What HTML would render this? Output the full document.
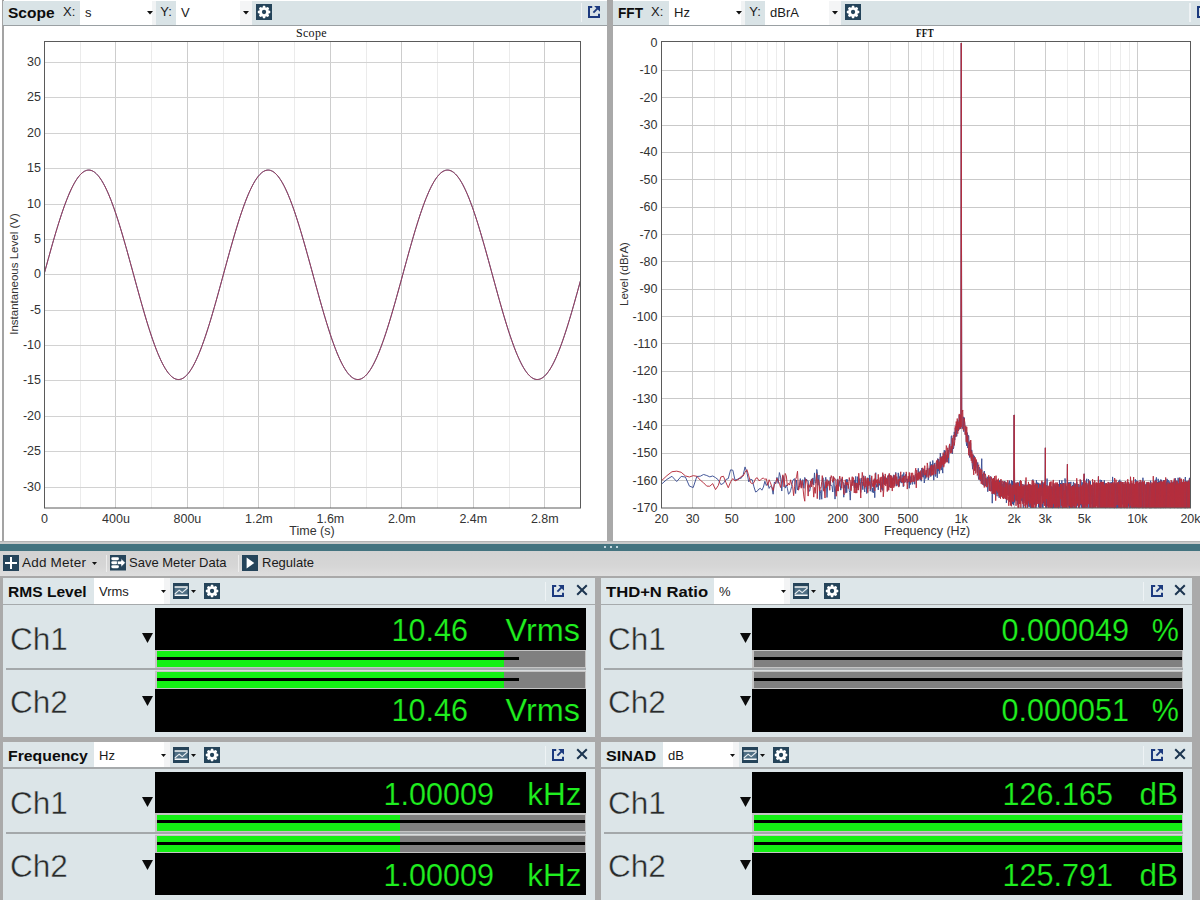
<!DOCTYPE html>
<html><head><meta charset="utf-8"><title>Scope / FFT meters</title>
<style>
html,body{margin:0;padding:0;}
body{width:1200px;height:900px;overflow:hidden;background:#fff;position:relative;
 font-family:"Liberation Sans",sans-serif;}
div,span,svg{position:absolute;}
span{white-space:nowrap;line-height:1;}
.tk{font-size:12.5px;color:#333;}
.r{text-align:right;}
.c{text-align:center;}
.big{font-size:31.5px;color:#1fee1f;-webkit-text-stroke:0.2px #000;transform-origin:100% 50%;}
.ch{font-size:32px;color:#2a2a2a;-webkit-text-stroke:0.45px #dce5e8;letter-spacing:0;transform-origin:0 0;transform:scaleX(0.985);}
.hb{font-size:15px;font-weight:bold;color:#0c0c0c;transform-origin:0 50%;}
.hs{font-size:13px;color:#1a1a1a;}
</style></head><body>

<div style="left:2px;top:0px;width:1.5px;height:541px;background:#a3a3a3;"></div>
<div style="left:3px;top:1px;width:604px;height:24px;background:#d9e3e6;"></div>
<div style="left:3px;top:25px;width:604px;height:1px;background:#9aa0a3;"></div>
<span class="hb" style="left:8px;top:5.7px;font-size:14.5px;letter-spacing:0px;transform-origin:0 50%;transform:scaleX(1.07);">Scope</span>
<span class="hs" style="left:63px;top:4.7px;font-size:13px;">X:</span>
<div style="left:80px;top:1px;width:76px;height:24px;background:#fff;"></div>
<div style="left:152px;top:1px;width:4px;height:24px;background:#f1f3f4;"></div>
<span class="hs" style="left:85px;top:6px;">s</span>
<svg style="left:147px;top:11px" width="6" height="3.5" viewBox="0 0 6 3.5"><path d="M0 0H6L3.0 3.5Z" fill="#111"/></svg>
<span class="hs" style="left:160.3px;top:4.7px;font-size:13px;">Y:</span>
<div style="left:176px;top:1px;width:76px;height:24px;background:#fff;"></div>
<div style="left:240px;top:1px;width:12px;height:24px;background:#f4f5f6;"></div>
<span class="hs" style="left:181px;top:6px;">V</span>
<svg style="left:243px;top:11px" width="6" height="3.5" viewBox="0 0 6 3.5"><path d="M0 0H6L3.0 3.5Z" fill="#111"/></svg>
<svg style="left:256.25px;top:4px" width="16" height="16" viewBox="0 0 16 16"><rect width="16" height="16" fill="#25445a"/><polygon points="6.39,3.71 7.05,1.78 9.05,1.78 9.71,3.71 9.91,3.79 11.74,2.89 13.16,4.31 12.26,6.14 12.34,6.34 14.27,7.00 14.27,9.00 12.34,9.66 12.26,9.86 13.16,11.69 11.74,13.11 9.91,12.21 9.71,12.29 9.05,14.22 7.05,14.22 6.39,12.29 6.19,12.21 4.36,13.11 2.94,11.69 3.84,9.86 3.76,9.66 1.83,9.00 1.83,7.00 3.76,6.34 3.84,6.14 2.94,4.31 4.36,2.89 6.19,3.79" fill="#fff"/><circle cx="8.05" cy="8.0" r="2.15" fill="#25445a"/></svg>
<div style="left:580.5px;top:3px;width:1.5px;height:19px;background:#eef2f4;"></div>
<svg style="left:588px;top:6px" width="12" height="12" viewBox="0 0 12 12"><path d="M4.2 1H1V11H11V7.8" fill="none" stroke="#1c3a7e" stroke-width="2"/><path d="M5.4 6.6L9.8 2.2" fill="none" stroke="#1c3a7e" stroke-width="1.9"/><path d="M6.2 0H12V5.8Z" fill="#1c3a7e"/></svg>
<div style="left:607px;top:0px;width:6px;height:541px;background:#a9a9a9;"></div>
<div style="left:613px;top:1px;width:587px;height:24px;background:#d9e3e6;"></div>
<div style="left:613px;top:25px;width:587px;height:1px;background:#9aa0a3;"></div>
<span class="hb" style="left:618px;top:5.7px;font-size:14.5px;letter-spacing:0px;transform-origin:0 50%;transform:scaleX(0.94);">FFT</span>
<span class="hs" style="left:651px;top:4.7px;font-size:13px;">X:</span>
<div style="left:669px;top:1px;width:76px;height:24px;background:#fff;"></div>
<div style="left:741px;top:1px;width:4px;height:24px;background:#f1f3f4;"></div>
<span class="hs" style="left:674px;top:6px;">Hz</span>
<svg style="left:736px;top:11px" width="6" height="3.5" viewBox="0 0 6 3.5"><path d="M0 0H6L3.0 3.5Z" fill="#111"/></svg>
<span class="hs" style="left:749.3px;top:4.7px;font-size:13px;">Y:</span>
<div style="left:765px;top:1px;width:76px;height:24px;background:#fff;"></div>
<div style="left:829px;top:1px;width:12px;height:24px;background:#f4f5f6;"></div>
<span class="hs" style="left:770px;top:6px;">dBrA</span>
<svg style="left:832px;top:11px" width="6" height="3.5" viewBox="0 0 6 3.5"><path d="M0 0H6L3.0 3.5Z" fill="#111"/></svg>
<svg style="left:845.25px;top:4px" width="16" height="16" viewBox="0 0 16 16"><rect width="16" height="16" fill="#25445a"/><polygon points="6.39,3.71 7.05,1.78 9.05,1.78 9.71,3.71 9.91,3.79 11.74,2.89 13.16,4.31 12.26,6.14 12.34,6.34 14.27,7.00 14.27,9.00 12.34,9.66 12.26,9.86 13.16,11.69 11.74,13.11 9.91,12.21 9.71,12.29 9.05,14.22 7.05,14.22 6.39,12.29 6.19,12.21 4.36,13.11 2.94,11.69 3.84,9.86 3.76,9.66 1.83,9.00 1.83,7.00 3.76,6.34 3.84,6.14 2.94,4.31 4.36,2.89 6.19,3.79" fill="#fff"/><circle cx="8.05" cy="8.0" r="2.15" fill="#25445a"/></svg>
<div style="left:1189.0px;top:3px;width:1.5px;height:19px;background:#eef2f4;"></div>
<svg style="left:1196.5px;top:6px" width="12" height="12" viewBox="0 0 12 12"><path d="M4.2 1H1V11H11V7.8" fill="none" stroke="#1c3a7e" stroke-width="2"/><path d="M5.4 6.6L9.8 2.2" fill="none" stroke="#1c3a7e" stroke-width="1.9"/><path d="M6.2 0H12V5.8Z" fill="#1c3a7e"/></svg>
<svg style="left:0;top:0" width="607" height="541" viewBox="0 0 607 541"><path d="M80.5 41.5V508" stroke="#ebebeb" stroke-width="1"/><path d="M115.5 41.5V508" stroke="#cdcdcd" stroke-width="1"/><path d="M151.5 41.5V508" stroke="#ebebeb" stroke-width="1"/><path d="M187.5 41.5V508" stroke="#cdcdcd" stroke-width="1"/><path d="M223.5 41.5V508" stroke="#ebebeb" stroke-width="1"/><path d="M258.5 41.5V508" stroke="#cdcdcd" stroke-width="1"/><path d="M294.5 41.5V508" stroke="#ebebeb" stroke-width="1"/><path d="M330.5 41.5V508" stroke="#cdcdcd" stroke-width="1"/><path d="M366.5 41.5V508" stroke="#ebebeb" stroke-width="1"/><path d="M401.5 41.5V508" stroke="#cdcdcd" stroke-width="1"/><path d="M437.5 41.5V508" stroke="#ebebeb" stroke-width="1"/><path d="M473.5 41.5V508" stroke="#cdcdcd" stroke-width="1"/><path d="M509.5 41.5V508" stroke="#ebebeb" stroke-width="1"/><path d="M544.5 41.5V508" stroke="#cdcdcd" stroke-width="1"/><path d="M44.5 487.5H580.5" stroke="#d2d2d2" stroke-width="1"/><path d="M44.5 451.5H580.5" stroke="#d2d2d2" stroke-width="1"/><path d="M44.5 416.5H580.5" stroke="#d2d2d2" stroke-width="1"/><path d="M44.5 380.5H580.5" stroke="#d2d2d2" stroke-width="1"/><path d="M44.5 345.5H580.5" stroke="#d2d2d2" stroke-width="1"/><path d="M44.5 310.5H580.5" stroke="#d2d2d2" stroke-width="1"/><path d="M44.5 274.5H580.5" stroke="#d2d2d2" stroke-width="1"/><path d="M44.5 239.5H580.5" stroke="#d2d2d2" stroke-width="1"/><path d="M44.5 204.5H580.5" stroke="#d2d2d2" stroke-width="1"/><path d="M44.5 168.5H580.5" stroke="#d2d2d2" stroke-width="1"/><path d="M44.5 133.5H580.5" stroke="#d2d2d2" stroke-width="1"/><path d="M44.5 97.5H580.5" stroke="#d2d2d2" stroke-width="1"/><path d="M44.5 62.5H580.5" stroke="#d2d2d2" stroke-width="1"/><polyline points="44.50,272.71 45.39,269.43 46.29,266.16 47.18,262.90 48.07,259.65 48.97,256.42 49.86,253.20 50.75,250.01 51.65,246.84 52.54,243.69 53.43,240.58 54.33,237.50 55.22,234.46 56.11,231.45 57.01,228.49 57.90,225.58 58.79,222.71 59.69,219.89 60.58,217.13 61.47,214.42 62.37,211.77 63.26,209.19 64.15,206.67 65.05,204.21 65.94,201.83 66.83,199.51 67.73,197.27 68.62,195.11 69.51,193.02 70.41,191.02 71.30,189.09 72.19,187.25 73.09,185.50 73.98,183.83 74.87,182.25 75.77,180.76 76.66,179.37 77.55,178.06 78.45,176.86 79.34,175.75 80.23,174.73 81.13,173.81 82.02,173.00 82.91,172.28 83.81,171.66 84.70,171.14 85.59,170.73 86.49,170.42 87.38,170.20 88.27,170.09 89.17,170.09 90.06,170.18 90.95,170.38 91.85,170.68 92.74,171.09 93.63,171.59 94.53,172.20 95.42,172.90 96.31,173.71 97.21,174.61 98.10,175.62 98.99,176.71 99.89,177.91 100.78,179.20 101.67,180.59 102.57,182.06 103.46,183.63 104.35,185.29 105.25,187.03 106.14,188.86 107.03,190.77 107.93,192.77 108.82,194.85 109.71,197.00 110.61,199.23 111.50,201.54 112.39,203.91 113.29,206.36 114.18,208.87 115.07,211.45 115.97,214.09 116.86,216.79 117.75,219.55 118.65,222.36 119.54,225.22 120.43,228.13 121.33,231.08 122.22,234.08 123.11,237.12 124.01,240.20 124.90,243.31 125.79,246.45 126.69,249.61 127.58,252.81 128.47,256.02 129.37,259.25 130.26,262.50 131.15,265.76 132.05,269.03 132.94,272.30 133.83,275.58 134.73,278.85 135.62,282.13 136.51,285.39 137.41,288.64 138.30,291.89 139.19,295.11 140.09,298.31 140.98,301.49 141.87,304.65 142.77,307.78 143.66,310.87 144.55,313.93 145.45,316.95 146.34,319.93 147.23,322.86 148.13,325.75 149.02,328.58 149.91,331.37 150.81,334.10 151.70,336.77 152.59,339.38 153.49,341.93 154.38,344.41 155.27,346.82 156.17,349.17 157.06,351.44 157.95,353.63 158.85,355.75 159.74,357.79 160.63,359.75 161.53,361.62 162.42,363.41 163.31,365.11 164.21,366.73 165.10,368.25 165.99,369.68 166.89,371.02 167.78,372.27 168.67,373.42 169.57,374.47 170.46,375.43 171.35,376.29 172.25,377.05 173.14,377.70 174.03,378.26 174.93,378.72 175.82,379.07 176.71,379.32 177.61,379.47 178.50,379.52 179.39,379.47 180.29,379.31 181.18,379.05 182.07,378.69 182.97,378.22 183.86,377.66 184.75,376.99 185.65,376.23 186.54,375.36 187.43,374.40 188.33,373.34 189.22,372.18 190.11,370.93 191.01,369.58 191.90,368.14 192.79,366.61 193.69,364.99 194.58,363.28 195.47,361.49 196.37,359.61 197.26,357.64 198.15,355.60 199.05,353.47 199.94,351.27 200.83,349.00 201.73,346.65 202.62,344.23 203.51,341.74 204.41,339.19 205.30,336.58 206.19,333.90 207.09,331.17 207.98,328.38 208.87,325.54 209.77,322.65 210.66,319.71 211.55,316.73 212.45,313.70 213.34,310.64 214.23,307.55 215.13,304.42 216.02,301.26 216.91,298.08 217.81,294.87 218.70,291.65 219.59,288.41 220.49,285.15 221.38,281.89 222.27,278.61 223.17,275.34 224.06,272.06 224.95,268.79 225.85,265.52 226.74,262.26 227.63,259.01 228.53,255.78 229.42,252.57 230.31,249.38 231.21,246.21 232.10,243.08 232.99,239.97 233.89,236.90 234.78,233.86 235.67,230.87 236.57,227.91 237.46,225.01 238.35,222.15 239.25,219.34 240.14,216.59 241.03,213.90 241.93,211.26 242.82,208.69 243.71,206.18 244.61,203.74 245.50,201.37 246.39,199.07 247.29,196.84 248.18,194.69 249.07,192.62 249.97,190.63 250.86,188.72 251.75,186.90 252.65,185.16 253.54,183.51 254.43,181.95 255.33,180.48 256.22,179.10 257.11,177.82 258.01,176.63 258.90,175.54 259.79,174.54 260.69,173.65 261.58,172.85 262.47,172.15 263.37,171.55 264.26,171.05 265.15,170.66 266.05,170.37 266.94,170.17 267.83,170.09 268.73,170.10 269.62,170.22 270.51,170.43 271.41,170.76 272.30,171.18 273.19,171.70 274.09,172.33 274.98,173.05 275.87,173.88 276.77,174.80 277.66,175.82 278.55,176.94 279.45,178.16 280.34,179.47 281.23,180.87 282.13,182.36 283.02,183.95 283.91,185.62 284.81,187.38 285.70,189.23 286.59,191.16 287.49,193.17 288.38,195.26 289.27,197.43 290.17,199.68 291.06,202.00 291.95,204.39 292.85,206.85 293.74,209.38 294.63,211.97 295.53,214.62 296.42,217.33 297.31,220.10 298.21,222.92 299.10,225.79 299.99,228.71 300.89,231.67 301.78,234.68 302.67,237.72 303.57,240.81 304.46,243.92 305.35,247.07 306.25,250.24 307.14,253.44 308.03,256.65 308.93,259.89 309.82,263.14 310.71,266.40 311.61,269.67 312.50,272.95 313.39,276.22 314.29,279.50 315.18,282.77 316.07,286.03 316.97,289.28 317.86,292.52 318.75,295.74 319.65,298.94 320.54,302.12 321.43,305.27 322.33,308.39 323.22,311.47 324.11,314.52 325.01,317.54 325.90,320.51 326.79,323.43 327.69,326.31 328.58,329.14 329.47,331.91 330.37,334.63 331.26,337.29 332.15,339.89 333.05,342.42 333.94,344.89 334.83,347.29 335.73,349.62 336.62,351.87 337.51,354.05 338.41,356.16 339.30,358.18 340.19,360.12 341.09,361.98 341.98,363.75 342.87,365.44 343.77,367.03 344.66,368.54 345.55,369.95 346.45,371.28 347.34,372.50 348.23,373.63 349.13,374.67 350.02,375.61 350.91,376.44 351.81,377.18 352.70,377.82 353.59,378.36 354.49,378.79 355.38,379.13 356.27,379.36 357.17,379.49 358.06,379.52 358.95,379.44 359.85,379.27 360.74,378.99 361.63,378.60 362.53,378.12 363.42,377.54 364.31,376.85 365.21,376.07 366.10,375.18 366.99,374.20 367.89,373.12 368.78,371.94 369.67,370.67 370.57,369.31 371.46,367.85 372.35,366.30 373.25,364.66 374.14,362.93 375.03,361.12 375.93,359.23 376.82,357.25 377.71,355.18 378.61,353.05 379.50,350.83 380.39,348.54 381.29,346.18 382.18,343.75 383.07,341.25 383.97,338.68 384.86,336.05 385.75,333.37 386.65,330.62 387.54,327.82 388.43,324.97 389.33,322.07 390.22,319.12 391.11,316.13 392.01,313.10 392.90,310.04 393.79,306.93 394.69,303.80 395.58,300.64 396.47,297.45 397.37,294.24 398.26,291.01 399.15,287.77 400.05,284.51 400.94,281.24 401.83,277.97 402.73,274.69 403.62,271.42 404.51,268.14 405.41,264.88 406.30,261.62 407.19,258.38 408.09,255.15 408.98,251.94 409.87,248.75 410.77,245.59 411.66,242.46 412.55,239.36 413.45,236.30 414.34,233.27 415.23,230.28 416.13,227.34 417.02,224.44 417.91,221.59 418.81,218.80 419.70,216.06 420.59,213.37 421.49,210.75 422.38,208.19 423.27,205.69 424.17,203.27 425.06,200.91 425.95,198.62 426.85,196.41 427.74,194.28 428.63,192.22 429.53,190.25 430.42,188.36 431.31,186.55 432.21,184.83 433.10,183.20 433.99,181.65 434.89,180.20 435.78,178.84 436.67,177.58 437.57,176.41 438.46,175.33 439.35,174.36 440.25,173.48 441.14,172.70 442.03,172.02 442.93,171.45 443.82,170.97 444.71,170.59 445.61,170.32 446.50,170.15 447.39,170.08 448.29,170.11 449.18,170.25 450.07,170.49 450.97,170.83 451.86,171.27 452.75,171.82 453.65,172.46 454.54,173.21 455.43,174.05 456.33,175.00 457.22,176.04 458.11,177.17 459.01,178.41 459.90,179.73 460.79,181.16 461.69,182.67 462.58,184.27 463.47,185.96 464.37,187.74 465.26,189.60 466.15,191.55 467.05,193.58 467.94,195.69 468.83,197.87 469.73,200.13 470.62,202.47 471.51,204.87 472.41,207.34 473.30,209.88 474.19,212.48 475.09,215.15 475.98,217.87 476.87,220.65 477.77,223.48 478.66,226.36 479.55,229.29 480.45,232.26 481.34,235.27 482.23,238.33 483.13,241.42 484.02,244.54 484.91,247.69 485.81,250.87 486.70,254.07 487.59,257.29 488.49,260.53 489.38,263.78 490.27,267.04 491.17,270.32 492.06,273.59 492.95,276.87 493.85,280.14 494.74,283.41 495.63,286.67 496.53,289.92 497.42,293.16 498.31,296.37 499.21,299.57 500.10,302.74 500.99,305.88 501.89,309.00 502.78,312.08 503.67,315.12 504.57,318.12 505.46,321.09 506.35,324.00 507.25,326.87 508.14,329.69 509.03,332.45 509.93,335.16 510.82,337.80 511.71,340.39 512.61,342.91 513.50,345.37 514.39,347.75 515.29,350.07 516.18,352.31 517.07,354.47 517.97,356.56 518.86,358.57 519.75,360.49 520.65,362.34 521.54,364.09 522.43,365.76 523.33,367.34 524.22,368.83 525.11,370.22 526.01,371.53 526.90,372.73 527.79,373.85 528.69,374.86 529.58,375.78 530.47,376.60 531.37,377.32 532.26,377.93 533.15,378.45 534.05,378.87 534.94,379.18 535.83,379.39 536.73,379.50 537.62,379.51 538.51,379.42 539.41,379.22 540.30,378.92 541.19,378.52 542.09,378.01 542.98,377.41 543.87,376.70 544.77,375.90 545.66,375.00 546.55,373.99 547.45,372.89 548.34,371.70 549.23,370.41 550.13,369.03 551.02,367.55 551.91,365.98 552.81,364.33 553.70,362.58 554.59,360.76 555.49,358.84 556.38,356.85 557.27,354.77 558.17,352.62 559.06,350.39 559.95,348.08 560.85,345.70 561.74,343.26 562.63,340.75 563.53,338.17 564.42,335.53 565.31,332.83 566.21,330.07 567.10,327.27 567.99,324.40 568.89,321.49 569.78,318.54 570.67,315.54 571.57,312.50 572.46,309.43 573.35,306.32 574.25,303.18 575.14,300.01 576.03,296.82 576.93,293.61 577.82,290.37 578.71,287.13 579.61,283.87 580.50,280.60" fill="none" stroke="#3f4d8c" stroke-width="1"/><polyline points="44.50,272.71 45.39,269.43 46.29,266.16 47.18,262.90 48.07,259.65 48.97,256.42 49.86,253.20 50.75,250.01 51.65,246.84 52.54,243.69 53.43,240.58 54.33,237.50 55.22,234.46 56.11,231.45 57.01,228.49 57.90,225.58 58.79,222.71 59.69,219.89 60.58,217.13 61.47,214.42 62.37,211.77 63.26,209.19 64.15,206.67 65.05,204.21 65.94,201.83 66.83,199.51 67.73,197.27 68.62,195.11 69.51,193.02 70.41,191.02 71.30,189.09 72.19,187.25 73.09,185.50 73.98,183.83 74.87,182.25 75.77,180.76 76.66,179.37 77.55,178.06 78.45,176.86 79.34,175.75 80.23,174.73 81.13,173.81 82.02,173.00 82.91,172.28 83.81,171.66 84.70,171.14 85.59,170.73 86.49,170.42 87.38,170.20 88.27,170.09 89.17,170.09 90.06,170.18 90.95,170.38 91.85,170.68 92.74,171.09 93.63,171.59 94.53,172.20 95.42,172.90 96.31,173.71 97.21,174.61 98.10,175.62 98.99,176.71 99.89,177.91 100.78,179.20 101.67,180.59 102.57,182.06 103.46,183.63 104.35,185.29 105.25,187.03 106.14,188.86 107.03,190.77 107.93,192.77 108.82,194.85 109.71,197.00 110.61,199.23 111.50,201.54 112.39,203.91 113.29,206.36 114.18,208.87 115.07,211.45 115.97,214.09 116.86,216.79 117.75,219.55 118.65,222.36 119.54,225.22 120.43,228.13 121.33,231.08 122.22,234.08 123.11,237.12 124.01,240.20 124.90,243.31 125.79,246.45 126.69,249.61 127.58,252.81 128.47,256.02 129.37,259.25 130.26,262.50 131.15,265.76 132.05,269.03 132.94,272.30 133.83,275.58 134.73,278.85 135.62,282.13 136.51,285.39 137.41,288.64 138.30,291.89 139.19,295.11 140.09,298.31 140.98,301.49 141.87,304.65 142.77,307.78 143.66,310.87 144.55,313.93 145.45,316.95 146.34,319.93 147.23,322.86 148.13,325.75 149.02,328.58 149.91,331.37 150.81,334.10 151.70,336.77 152.59,339.38 153.49,341.93 154.38,344.41 155.27,346.82 156.17,349.17 157.06,351.44 157.95,353.63 158.85,355.75 159.74,357.79 160.63,359.75 161.53,361.62 162.42,363.41 163.31,365.11 164.21,366.73 165.10,368.25 165.99,369.68 166.89,371.02 167.78,372.27 168.67,373.42 169.57,374.47 170.46,375.43 171.35,376.29 172.25,377.05 173.14,377.70 174.03,378.26 174.93,378.72 175.82,379.07 176.71,379.32 177.61,379.47 178.50,379.52 179.39,379.47 180.29,379.31 181.18,379.05 182.07,378.69 182.97,378.22 183.86,377.66 184.75,376.99 185.65,376.23 186.54,375.36 187.43,374.40 188.33,373.34 189.22,372.18 190.11,370.93 191.01,369.58 191.90,368.14 192.79,366.61 193.69,364.99 194.58,363.28 195.47,361.49 196.37,359.61 197.26,357.64 198.15,355.60 199.05,353.47 199.94,351.27 200.83,349.00 201.73,346.65 202.62,344.23 203.51,341.74 204.41,339.19 205.30,336.58 206.19,333.90 207.09,331.17 207.98,328.38 208.87,325.54 209.77,322.65 210.66,319.71 211.55,316.73 212.45,313.70 213.34,310.64 214.23,307.55 215.13,304.42 216.02,301.26 216.91,298.08 217.81,294.87 218.70,291.65 219.59,288.41 220.49,285.15 221.38,281.89 222.27,278.61 223.17,275.34 224.06,272.06 224.95,268.79 225.85,265.52 226.74,262.26 227.63,259.01 228.53,255.78 229.42,252.57 230.31,249.38 231.21,246.21 232.10,243.08 232.99,239.97 233.89,236.90 234.78,233.86 235.67,230.87 236.57,227.91 237.46,225.01 238.35,222.15 239.25,219.34 240.14,216.59 241.03,213.90 241.93,211.26 242.82,208.69 243.71,206.18 244.61,203.74 245.50,201.37 246.39,199.07 247.29,196.84 248.18,194.69 249.07,192.62 249.97,190.63 250.86,188.72 251.75,186.90 252.65,185.16 253.54,183.51 254.43,181.95 255.33,180.48 256.22,179.10 257.11,177.82 258.01,176.63 258.90,175.54 259.79,174.54 260.69,173.65 261.58,172.85 262.47,172.15 263.37,171.55 264.26,171.05 265.15,170.66 266.05,170.37 266.94,170.17 267.83,170.09 268.73,170.10 269.62,170.22 270.51,170.43 271.41,170.76 272.30,171.18 273.19,171.70 274.09,172.33 274.98,173.05 275.87,173.88 276.77,174.80 277.66,175.82 278.55,176.94 279.45,178.16 280.34,179.47 281.23,180.87 282.13,182.36 283.02,183.95 283.91,185.62 284.81,187.38 285.70,189.23 286.59,191.16 287.49,193.17 288.38,195.26 289.27,197.43 290.17,199.68 291.06,202.00 291.95,204.39 292.85,206.85 293.74,209.38 294.63,211.97 295.53,214.62 296.42,217.33 297.31,220.10 298.21,222.92 299.10,225.79 299.99,228.71 300.89,231.67 301.78,234.68 302.67,237.72 303.57,240.81 304.46,243.92 305.35,247.07 306.25,250.24 307.14,253.44 308.03,256.65 308.93,259.89 309.82,263.14 310.71,266.40 311.61,269.67 312.50,272.95 313.39,276.22 314.29,279.50 315.18,282.77 316.07,286.03 316.97,289.28 317.86,292.52 318.75,295.74 319.65,298.94 320.54,302.12 321.43,305.27 322.33,308.39 323.22,311.47 324.11,314.52 325.01,317.54 325.90,320.51 326.79,323.43 327.69,326.31 328.58,329.14 329.47,331.91 330.37,334.63 331.26,337.29 332.15,339.89 333.05,342.42 333.94,344.89 334.83,347.29 335.73,349.62 336.62,351.87 337.51,354.05 338.41,356.16 339.30,358.18 340.19,360.12 341.09,361.98 341.98,363.75 342.87,365.44 343.77,367.03 344.66,368.54 345.55,369.95 346.45,371.28 347.34,372.50 348.23,373.63 349.13,374.67 350.02,375.61 350.91,376.44 351.81,377.18 352.70,377.82 353.59,378.36 354.49,378.79 355.38,379.13 356.27,379.36 357.17,379.49 358.06,379.52 358.95,379.44 359.85,379.27 360.74,378.99 361.63,378.60 362.53,378.12 363.42,377.54 364.31,376.85 365.21,376.07 366.10,375.18 366.99,374.20 367.89,373.12 368.78,371.94 369.67,370.67 370.57,369.31 371.46,367.85 372.35,366.30 373.25,364.66 374.14,362.93 375.03,361.12 375.93,359.23 376.82,357.25 377.71,355.18 378.61,353.05 379.50,350.83 380.39,348.54 381.29,346.18 382.18,343.75 383.07,341.25 383.97,338.68 384.86,336.05 385.75,333.37 386.65,330.62 387.54,327.82 388.43,324.97 389.33,322.07 390.22,319.12 391.11,316.13 392.01,313.10 392.90,310.04 393.79,306.93 394.69,303.80 395.58,300.64 396.47,297.45 397.37,294.24 398.26,291.01 399.15,287.77 400.05,284.51 400.94,281.24 401.83,277.97 402.73,274.69 403.62,271.42 404.51,268.14 405.41,264.88 406.30,261.62 407.19,258.38 408.09,255.15 408.98,251.94 409.87,248.75 410.77,245.59 411.66,242.46 412.55,239.36 413.45,236.30 414.34,233.27 415.23,230.28 416.13,227.34 417.02,224.44 417.91,221.59 418.81,218.80 419.70,216.06 420.59,213.37 421.49,210.75 422.38,208.19 423.27,205.69 424.17,203.27 425.06,200.91 425.95,198.62 426.85,196.41 427.74,194.28 428.63,192.22 429.53,190.25 430.42,188.36 431.31,186.55 432.21,184.83 433.10,183.20 433.99,181.65 434.89,180.20 435.78,178.84 436.67,177.58 437.57,176.41 438.46,175.33 439.35,174.36 440.25,173.48 441.14,172.70 442.03,172.02 442.93,171.45 443.82,170.97 444.71,170.59 445.61,170.32 446.50,170.15 447.39,170.08 448.29,170.11 449.18,170.25 450.07,170.49 450.97,170.83 451.86,171.27 452.75,171.82 453.65,172.46 454.54,173.21 455.43,174.05 456.33,175.00 457.22,176.04 458.11,177.17 459.01,178.41 459.90,179.73 460.79,181.16 461.69,182.67 462.58,184.27 463.47,185.96 464.37,187.74 465.26,189.60 466.15,191.55 467.05,193.58 467.94,195.69 468.83,197.87 469.73,200.13 470.62,202.47 471.51,204.87 472.41,207.34 473.30,209.88 474.19,212.48 475.09,215.15 475.98,217.87 476.87,220.65 477.77,223.48 478.66,226.36 479.55,229.29 480.45,232.26 481.34,235.27 482.23,238.33 483.13,241.42 484.02,244.54 484.91,247.69 485.81,250.87 486.70,254.07 487.59,257.29 488.49,260.53 489.38,263.78 490.27,267.04 491.17,270.32 492.06,273.59 492.95,276.87 493.85,280.14 494.74,283.41 495.63,286.67 496.53,289.92 497.42,293.16 498.31,296.37 499.21,299.57 500.10,302.74 500.99,305.88 501.89,309.00 502.78,312.08 503.67,315.12 504.57,318.12 505.46,321.09 506.35,324.00 507.25,326.87 508.14,329.69 509.03,332.45 509.93,335.16 510.82,337.80 511.71,340.39 512.61,342.91 513.50,345.37 514.39,347.75 515.29,350.07 516.18,352.31 517.07,354.47 517.97,356.56 518.86,358.57 519.75,360.49 520.65,362.34 521.54,364.09 522.43,365.76 523.33,367.34 524.22,368.83 525.11,370.22 526.01,371.53 526.90,372.73 527.79,373.85 528.69,374.86 529.58,375.78 530.47,376.60 531.37,377.32 532.26,377.93 533.15,378.45 534.05,378.87 534.94,379.18 535.83,379.39 536.73,379.50 537.62,379.51 538.51,379.42 539.41,379.22 540.30,378.92 541.19,378.52 542.09,378.01 542.98,377.41 543.87,376.70 544.77,375.90 545.66,375.00 546.55,373.99 547.45,372.89 548.34,371.70 549.23,370.41 550.13,369.03 551.02,367.55 551.91,365.98 552.81,364.33 553.70,362.58 554.59,360.76 555.49,358.84 556.38,356.85 557.27,354.77 558.17,352.62 559.06,350.39 559.95,348.08 560.85,345.70 561.74,343.26 562.63,340.75 563.53,338.17 564.42,335.53 565.31,332.83 566.21,330.07 567.10,327.27 567.99,324.40 568.89,321.49 569.78,318.54 570.67,315.54 571.57,312.50 572.46,309.43 573.35,306.32 574.25,303.18 575.14,300.01 576.03,296.82 576.93,293.61 577.82,290.37 578.71,287.13 579.61,283.87 580.50,280.60" fill="none" stroke="#a83a50" stroke-width="1" opacity="0.85"/><rect x="44.5" y="41.5" width="536.0" height="466.5" fill="none" stroke="#5a5a5a" stroke-width="1"/></svg>
<span class="tk r" style="left:0;width:41px;top:480.6px">-30</span>
<span class="tk r" style="left:0;width:41px;top:445.2px">-25</span>
<span class="tk r" style="left:0;width:41px;top:409.8px">-20</span>
<span class="tk r" style="left:0;width:41px;top:374.4px">-15</span>
<span class="tk r" style="left:0;width:41px;top:339.1px">-10</span>
<span class="tk r" style="left:0;width:41px;top:303.7px">-5</span>
<span class="tk r" style="left:0;width:41px;top:268.3px">0</span>
<span class="tk r" style="left:0;width:41px;top:232.9px">5</span>
<span class="tk r" style="left:0;width:41px;top:197.5px">10</span>
<span class="tk r" style="left:0;width:41px;top:162.2px">15</span>
<span class="tk r" style="left:0;width:41px;top:126.8px">20</span>
<span class="tk r" style="left:0;width:41px;top:91.4px">25</span>
<span class="tk r" style="left:0;width:41px;top:56.0px">30</span>
<span class="tk c" style="left:14.5px;width:60px;top:512.5px">0</span>
<span class="tk c" style="left:86.0px;width:60px;top:512.5px">400u</span>
<span class="tk c" style="left:157.4px;width:60px;top:512.5px">800u</span>
<span class="tk c" style="left:228.9px;width:60px;top:512.5px">1.2m</span>
<span class="tk c" style="left:300.4px;width:60px;top:512.5px">1.6m</span>
<span class="tk c" style="left:371.8px;width:60px;top:512.5px">2.0m</span>
<span class="tk c" style="left:443.3px;width:60px;top:512.5px">2.4m</span>
<span class="tk c" style="left:514.8px;width:60px;top:512.5px">2.8m</span>
<span class="tk c" style="left:262px;width:100px;top:524.5px">Time (s)</span>
<span class="tk" style="left:15px;top:274px;transform:translate(-50%,-50%) rotate(-90deg);font-size:11.5px">Instantaneous Level (V)</span>
<span style="left:296px;top:27px;font-family:'Liberation Serif',serif;font-size:12px;color:#111;letter-spacing:0.3px">Scope</span>
<svg style="left:613px;top:26px" width="587" height="515" viewBox="613 26 587 515"><path d="M714.5 41.5V508.0" stroke="#ececec" stroke-width="1"/><path d="M745.5 41.5V508.0" stroke="#ececec" stroke-width="1"/><path d="M757.5 41.5V508.0" stroke="#ececec" stroke-width="1"/><path d="M767.5 41.5V508.0" stroke="#ececec" stroke-width="1"/><path d="M776.5 41.5V508.0" stroke="#ececec" stroke-width="1"/><path d="M890.5 41.5V508.0" stroke="#ececec" stroke-width="1"/><path d="M921.5 41.5V508.0" stroke="#ececec" stroke-width="1"/><path d="M933.5 41.5V508.0" stroke="#ececec" stroke-width="1"/><path d="M943.5 41.5V508.0" stroke="#ececec" stroke-width="1"/><path d="M953.5 41.5V508.0" stroke="#ececec" stroke-width="1"/><path d="M1067.5 41.5V508.0" stroke="#ececec" stroke-width="1"/><path d="M1098.5 41.5V508.0" stroke="#ececec" stroke-width="1"/><path d="M1110.5 41.5V508.0" stroke="#ececec" stroke-width="1"/><path d="M1120.5 41.5V508.0" stroke="#ececec" stroke-width="1"/><path d="M1129.5 41.5V508.0" stroke="#ececec" stroke-width="1"/><path d="M692.5 41.5V508.0" stroke="#cdcdcd" stroke-width="1"/><path d="M731.5 41.5V508.0" stroke="#cdcdcd" stroke-width="1"/><path d="M784.5 41.5V508.0" stroke="#cdcdcd" stroke-width="1"/><path d="M837.5 41.5V508.0" stroke="#cdcdcd" stroke-width="1"/><path d="M868.5 41.5V508.0" stroke="#cdcdcd" stroke-width="1"/><path d="M908.5 41.5V508.0" stroke="#cdcdcd" stroke-width="1"/><path d="M961.5 41.5V508.0" stroke="#cdcdcd" stroke-width="1"/><path d="M1014.5 41.5V508.0" stroke="#cdcdcd" stroke-width="1"/><path d="M1045.5 41.5V508.0" stroke="#cdcdcd" stroke-width="1"/><path d="M1084.5 41.5V508.0" stroke="#cdcdcd" stroke-width="1"/><path d="M1137.5 41.5V508.0" stroke="#cdcdcd" stroke-width="1"/><path d="M661.5 70.5H1190.5" stroke="#c9c9c9" stroke-width="1"/><path d="M661.5 97.5H1190.5" stroke="#c9c9c9" stroke-width="1"/><path d="M661.5 125.5H1190.5" stroke="#c9c9c9" stroke-width="1"/><path d="M661.5 152.5H1190.5" stroke="#c9c9c9" stroke-width="1"/><path d="M661.5 179.5H1190.5" stroke="#c9c9c9" stroke-width="1"/><path d="M661.5 207.5H1190.5" stroke="#c9c9c9" stroke-width="1"/><path d="M661.5 234.5H1190.5" stroke="#c9c9c9" stroke-width="1"/><path d="M661.5 261.5H1190.5" stroke="#c9c9c9" stroke-width="1"/><path d="M661.5 289.5H1190.5" stroke="#c9c9c9" stroke-width="1"/><path d="M661.5 316.5H1190.5" stroke="#c9c9c9" stroke-width="1"/><path d="M661.5 343.5H1190.5" stroke="#c9c9c9" stroke-width="1"/><path d="M661.5 371.5H1190.5" stroke="#c9c9c9" stroke-width="1"/><path d="M661.5 398.5H1190.5" stroke="#c9c9c9" stroke-width="1"/><path d="M661.5 425.5H1190.5" stroke="#c9c9c9" stroke-width="1"/><path d="M661.5 453.5H1190.5" stroke="#c9c9c9" stroke-width="1"/><path d="M661.5 480.5H1190.5" stroke="#c9c9c9" stroke-width="1"/><polyline points="661.50,484.12 666.91,479.42 671.97,476.29 676.71,481.54 681.18,476.41 685.40,477.04 689.40,486.11 693.20,487.55 696.82,476.46 700.28,476.22 703.59,474.48 706.76,475.51 709.80,476.87 712.73,475.96 715.55,477.64 718.27,479.80 720.90,484.59 723.44,483.35 725.90,479.51 728.28,478.57 730.59,469.84 732.83,470.22 735.01,480.07 737.13,479.51 739.19,478.23 741.20,478.25 743.15,474.91 745.06,466.91 746.92,472.41 748.74,481.92 750.51,479.21 752.25,479.86 753.95,486.82 755.61,492.04 757.23,491.20 758.82,489.11 760.38,488.37 761.90,490.20 763.40,487.12 764.87,481.24 766.31,485.51 767.73,482.79 769.11,488.43 770.48,486.12 771.82,487.15 773.13,494.21 774.43,481.95 775.70,483.61 776.95,477.36 778.19,483.46 779.40,472.56 780.59,477.06 781.77,491.03 782.93,475.80 784.07,480.17 785.19,488.11 786.30,484.91 787.39,488.28 788.47,494.16 789.53,493.32 790.57,490.53 791.61,486.62 792.63,480.95 793.63,479.20 794.62,478.70 795.60,493.49 796.57,479.99 797.53,489.92 798.47,487.15 799.40,485.41 800.32,478.60 801.23,487.21 802.13,480.42 803.02,479.64 803.90,488.38 804.77,477.42 805.63,480.51 806.48,479.03 807.32,480.98 808.15,480.90 808.97,491.16 809.79,491.03 810.59,486.29 811.39,479.10 812.17,484.29 812.95,477.92 813.73,485.04 814.49,472.90 815.25,483.07 816.00,482.88 816.75,469.45 817.25,471.42 818.00,485.28 819.00,474.98 819.75,499.56 820.25,493.82 821.00,490.32 821.75,499.26 822.25,482.55 823.00,477.78 823.75,486.05 824.25,490.38 825.00,481.99 825.75,477.29 826.25,481.24 827.00,497.44 827.75,484.41 828.25,480.72 829.00,482.62 829.75,485.49 830.25,477.24 830.75,485.81 831.25,485.30 832.00,486.43 832.75,492.03 833.25,483.70 833.75,477.14 834.25,484.88 835.00,499.12 835.75,486.70 836.25,485.78 836.75,485.55 837.25,478.94 837.75,479.41 838.25,483.99 839.00,486.40 839.75,480.45 840.25,485.31 840.75,490.15 841.25,482.83 841.75,478.69 842.25,481.66 842.75,482.55 843.25,482.23 843.75,497.21 844.25,484.98 844.75,488.05 845.25,483.13 845.75,492.82 846.25,479.22 846.75,492.60 847.25,479.39 847.75,485.06 848.25,484.15 848.75,486.22 849.25,490.47 849.75,492.48 850.25,500.13 850.75,490.05 851.25,485.84 851.75,483.80 852.25,481.69 852.75,482.55 853.25,480.75 853.75,480.68 854.25,487.67 854.75,480.16 855.25,487.98 855.75,476.39 856.25,489.60 856.75,484.83 857.25,487.74 857.75,476.65 858.25,490.17 858.75,483.84 859.25,484.94 859.75,478.60 860.25,481.33 860.75,492.48 861.25,478.01 861.75,483.09 862.25,481.93 862.75,489.60 863.25,477.14 863.75,475.74 864.25,489.20 864.75,491.97 865.25,478.51 865.75,481.82 866.25,485.66 866.75,493.54 867.25,477.69 867.75,489.10 868.25,481.64 868.75,485.70 869.25,484.09 869.75,474.95 870.25,491.21 870.75,483.27 871.25,477.74 871.75,487.08 872.25,492.08 872.75,488.00 873.25,492.94 873.75,479.83 874.25,481.70 874.75,497.68 875.25,479.57 875.75,472.69 876.25,487.38 876.75,484.48 877.25,486.39 877.75,482.23 878.25,489.87 878.75,480.43 879.25,483.18 879.75,485.39 880.25,478.71 880.75,479.67 881.25,483.01 881.75,489.47 882.25,482.31 882.75,490.56 883.25,474.70 883.75,484.13 884.25,478.18 884.75,484.45 885.25,477.06 885.75,484.12 886.25,477.69 886.75,483.64 887.25,479.50 887.75,490.56 888.25,477.70 888.75,474.64 889.25,484.72 889.75,486.94 890.25,475.51 890.75,475.36 891.25,484.17 891.75,478.58 892.25,486.37 892.75,478.29 893.25,480.78 893.75,474.80 894.25,479.59 894.75,485.61 895.25,480.83 895.75,472.36 896.25,482.71 896.75,486.17 897.25,483.86 897.75,481.01 898.25,472.85 898.75,478.19 899.25,486.33 899.75,476.44 900.25,482.20 900.75,474.92 901.25,483.13 901.75,481.01 902.25,475.05 902.75,474.54 903.25,486.76 903.75,472.46 904.25,482.40 904.75,482.92 905.25,477.60 905.75,474.29 906.25,480.32 906.75,478.92 907.25,483.15 907.75,478.78 908.25,482.16 908.75,476.77 909.25,488.28 909.75,475.26 910.25,484.66 910.75,476.58 911.25,481.08 911.75,477.74 912.25,484.48 912.75,484.01 913.25,475.98 913.75,480.20 914.25,476.79 914.75,484.25 915.25,475.25 915.75,473.80 916.25,479.84 916.75,474.59 917.25,480.43 917.75,477.81 918.25,468.31 918.75,478.36 919.25,471.98 919.75,471.66 920.25,480.05 920.75,474.79 921.25,481.25 921.75,468.07 922.25,476.80 922.75,470.96 923.25,477.29 923.75,468.89 924.25,482.99 924.75,479.79 925.25,473.26 925.75,478.50 926.25,470.55 926.75,475.93 927.25,468.04 927.75,468.40 928.25,479.98 928.75,476.41 929.25,467.86 929.75,473.37 930.25,461.74 930.75,476.64 931.25,464.29 931.75,467.46 932.25,471.74 932.75,460.48 933.25,469.19 933.75,480.22 934.25,463.74 934.75,462.95 935.25,476.42 935.75,476.19 936.25,462.69 936.75,466.65 937.25,477.85 937.75,458.53 938.25,471.21 938.75,459.11 939.25,473.61 939.75,470.39 940.25,453.06 940.75,456.93 941.25,470.09 941.75,456.77 942.25,467.37 942.75,473.13 943.25,453.89 943.75,465.68 944.25,450.23 944.75,461.92 945.25,450.61 945.75,461.22 946.25,454.72 946.75,461.78 947.25,452.72 947.75,459.12 948.25,450.04 948.75,463.27 949.25,445.57 949.75,446.88 950.25,452.28 950.75,451.79 951.25,436.08 951.75,435.63 952.25,453.92 952.75,441.53 953.25,449.00 953.75,447.28 954.25,431.87 954.75,440.06 955.25,427.97 955.75,436.63 956.25,424.28 956.75,436.36 957.25,422.55 957.75,420.02 958.25,430.99 958.75,429.44 959.25,415.17 959.75,429.14 960.25,417.05 960.75,428.68 961.25,43.00 961.75,415.68 962.25,426.44 962.75,428.78 963.25,416.85 963.75,431.67 964.25,417.54 964.75,423.55 965.25,434.68 965.75,427.70 966.25,443.03 966.75,445.88 967.25,432.56 967.75,448.04 968.25,435.23 968.75,435.52 969.25,453.27 969.75,457.58 970.25,440.61 970.75,443.72 971.25,459.04 971.75,449.91 972.25,465.00 972.75,469.20 973.25,454.75 973.75,466.42 974.25,455.84 974.75,470.69 975.25,460.30 975.75,467.67 976.25,461.20 976.75,463.34 977.25,472.49 977.75,462.44 978.25,476.53 978.75,479.51 979.25,467.21 979.75,468.07 980.25,481.17 980.75,480.20 981.25,469.83 981.75,458.66 982.25,484.27 982.75,474.07 983.25,482.95 983.75,485.44 984.25,471.03 984.75,475.43 985.25,486.13 985.75,478.00 986.25,482.95 986.75,485.12 987.25,476.76 987.75,491.73 988.25,477.27 988.75,479.39 989.25,488.32 989.75,490.98 990.25,476.32 990.75,477.27 991.25,491.01 991.83,481.33 992.17,494.64 992.24,503.18 992.58,480.03 992.93,490.65 993.27,477.95 993.62,492.43 993.96,480.37 994.31,494.44 994.65,479.89 995.00,491.04 995.34,480.93 995.69,483.74 996.03,493.74 996.38,485.59 996.72,492.20 997.07,496.29 997.41,483.75 997.76,493.54 998.10,479.84 998.45,484.21 998.79,494.17 999.14,497.81 999.48,480.59 999.83,483.33 1000.17,496.63 1000.52,480.10 1000.86,494.42 1001.21,482.00 1001.55,496.47 1001.90,480.92 1002.24,493.46 1002.59,495.93 1002.93,484.03 1003.28,494.55 1003.62,481.90 1003.97,498.58 1004.31,485.89 1004.66,481.00 1005.00,494.57 1005.35,494.95 1005.69,482.48 1006.04,482.20 1006.38,502.84 1006.73,495.88 1007.07,483.82 1007.42,485.98 1007.76,494.99 1008.11,482.73 1008.45,494.41 1008.80,496.26 1009.14,482.18 1009.49,480.64 1009.83,501.51 1010.17,502.27 1010.51,484.22 1010.86,502.38 1011.20,483.17 1011.55,480.26 1011.89,499.40 1012.24,504.09 1012.58,481.18 1012.93,504.11 1013.27,481.07 1013.62,505.18 1013.96,415.00 1014.31,415.00 1014.65,502.41 1015.00,486.31 1015.34,500.45 1015.69,483.36 1016.03,499.86 1016.38,484.12 1016.72,500.68 1017.07,482.29 1017.41,499.36 1017.76,504.54 1018.10,486.70 1018.45,483.02 1018.79,498.79 1019.14,488.45 1019.48,498.18 1019.83,481.26 1020.17,499.20 1020.52,499.88 1020.86,486.07 1021.21,483.55 1021.55,500.69 1021.90,486.19 1022.24,502.36 1022.59,502.23 1022.93,484.10 1023.28,507.84 1023.62,485.45 1023.97,500.64 1024.31,487.37 1024.66,485.83 1025.00,503.00 1025.35,480.99 1025.69,508.00 1026.04,485.17 1026.38,503.33 1026.73,500.37 1027.07,484.57 1027.42,506.32 1027.76,487.25 1028.11,503.04 1028.45,484.04 1028.80,506.76 1029.14,484.86 1029.49,484.06 1029.83,506.84 1030.17,484.45 1030.51,503.32 1030.86,508.00 1031.20,485.24 1031.55,505.08 1031.89,486.49 1032.24,486.28 1032.58,503.64 1032.93,479.44 1033.27,503.23 1033.62,502.44 1033.96,488.42 1034.31,504.55 1034.65,485.41 1035.00,504.48 1035.34,487.02 1035.69,484.33 1036.03,508.00 1036.38,480.18 1036.72,498.50 1037.07,502.75 1037.41,482.63 1037.76,501.69 1038.10,482.89 1038.45,507.39 1038.79,482.95 1039.14,484.73 1039.48,508.00 1039.83,499.74 1040.17,488.46 1040.52,508.00 1040.86,483.42 1041.21,495.75 1041.55,484.47 1041.90,481.84 1042.24,507.03 1042.59,482.31 1042.93,508.00 1043.28,484.88 1043.62,503.02 1043.97,482.44 1044.31,504.34 1044.66,503.82 1045.00,482.47 1045.35,447.82 1045.69,504.98 1046.04,485.06 1046.38,503.35 1046.73,508.00 1047.07,478.59 1047.42,506.05 1047.76,487.13 1048.11,486.65 1048.45,508.00 1048.80,488.39 1049.14,506.08 1049.49,483.70 1049.83,506.31 1050.17,484.14 1050.51,503.21 1050.86,508.00 1051.20,486.61 1051.55,486.42 1051.89,508.00 1052.24,486.80 1052.58,508.00 1052.93,508.00 1053.27,483.31 1053.62,508.00 1053.96,489.19 1054.31,504.40 1054.65,484.69 1055.00,484.13 1055.34,507.04 1055.69,485.71 1056.03,507.20 1056.38,486.44 1056.72,506.14 1057.07,484.21 1057.41,506.08 1057.76,484.16 1058.10,508.00 1058.45,508.00 1058.79,484.02 1059.14,506.29 1059.48,480.20 1059.83,506.36 1060.17,484.60 1060.52,483.01 1060.86,508.00 1061.21,504.22 1061.55,485.54 1061.90,480.32 1062.24,508.00 1062.59,483.24 1062.93,506.20 1063.28,504.71 1063.62,483.10 1063.97,483.97 1064.31,505.48 1064.66,504.43 1065.00,478.44 1065.35,483.05 1065.69,505.62 1066.04,485.72 1066.38,507.50 1066.73,486.55 1067.07,505.18 1067.42,464.24 1067.76,504.55 1068.11,506.79 1068.45,482.43 1068.80,488.06 1069.14,507.73 1069.49,508.00 1069.83,482.07 1070.17,508.00 1070.51,486.65 1070.86,481.84 1071.20,508.00 1071.55,507.47 1071.89,485.93 1072.24,508.00 1072.58,484.98 1072.93,508.00 1073.27,482.25 1073.62,482.04 1073.96,508.00 1074.31,506.66 1074.65,484.95 1075.00,504.09 1075.34,483.65 1075.69,484.28 1076.03,504.04 1076.38,508.00 1076.72,482.00 1077.07,487.18 1077.41,501.78 1077.76,505.80 1078.10,486.50 1078.45,508.00 1078.79,484.03 1079.14,486.86 1079.48,508.00 1079.83,508.00 1080.17,485.16 1080.52,505.15 1080.86,479.91 1081.21,483.49 1081.55,507.35 1081.90,508.00 1082.24,482.33 1082.59,485.80 1082.93,506.90 1083.28,508.00 1083.62,479.21 1083.97,508.00 1084.31,473.81 1084.66,506.60 1085.00,486.62 1085.35,482.92 1085.69,505.87 1086.04,508.00 1086.38,480.99 1086.73,478.78 1087.07,505.86 1087.42,506.05 1087.76,485.07 1088.11,508.00 1088.45,479.12 1088.80,503.84 1089.14,481.43 1089.49,508.00 1089.83,484.48 1090.17,508.00 1090.51,481.34 1090.86,508.00 1091.20,486.74 1091.55,485.32 1091.89,504.21 1092.24,485.16 1092.58,508.00 1092.93,487.88 1093.27,508.00 1093.62,506.52 1093.96,482.20 1094.31,507.67 1094.65,483.16 1095.00,485.09 1095.34,503.69 1095.69,508.00 1096.03,484.30 1096.38,483.33 1096.72,503.57 1097.07,503.66 1097.41,484.52 1097.76,485.23 1098.10,508.00 1098.45,476.54 1098.79,505.96 1099.14,507.11 1099.48,485.36 1099.83,508.00 1100.17,479.74 1100.52,508.00 1100.86,482.48 1101.21,507.83 1101.55,480.01 1101.90,508.00 1102.24,483.47 1102.59,482.55 1102.93,507.35 1103.28,508.00 1103.62,486.95 1103.97,508.00 1104.31,480.32 1104.66,485.78 1105.00,508.00 1105.35,508.00 1105.69,485.89 1106.04,483.04 1106.38,506.19 1106.73,508.00 1107.07,486.11 1107.42,508.00 1107.76,485.34 1108.11,484.30 1108.45,506.67 1108.80,482.07 1109.14,504.93 1109.49,484.69 1109.83,508.00 1110.17,508.00 1110.51,483.81 1110.86,482.35 1111.20,505.12 1111.55,506.11 1111.89,482.02 1112.24,504.44 1112.58,476.92 1112.93,482.46 1113.27,505.92 1113.62,485.01 1113.96,508.00 1114.31,508.00 1114.65,482.54 1115.00,508.00 1115.34,483.44 1115.69,484.33 1116.03,508.00 1116.38,483.40 1116.72,508.00 1117.07,508.00 1117.41,483.17 1117.76,508.00 1118.10,482.06 1118.45,508.00 1118.79,480.81 1119.14,508.00 1119.48,481.83 1119.83,479.71 1120.17,508.00 1120.52,508.00 1120.86,481.19 1121.21,485.04 1121.55,508.00 1121.90,508.00 1122.24,482.35 1122.59,504.16 1122.93,482.62 1123.28,505.07 1123.62,484.21 1123.97,508.00 1124.31,484.06 1124.66,508.00 1125.00,482.54 1125.35,481.29 1125.69,504.25 1126.04,485.42 1126.38,508.00 1126.73,483.66 1127.07,508.00 1127.42,508.00 1127.76,482.49 1128.11,482.93 1128.45,506.36 1128.80,482.51 1129.14,508.00 1129.49,484.13 1129.83,508.00 1130.17,508.00 1130.51,484.57 1130.86,508.00 1131.20,482.91 1131.55,502.16 1131.89,483.69 1132.24,487.26 1132.58,508.00 1132.93,508.00 1133.27,482.63 1133.62,508.00 1133.96,484.13 1134.31,508.00 1134.65,484.71 1135.00,508.00 1135.34,479.28 1135.69,508.00 1136.03,480.33 1136.38,481.61 1136.72,508.00 1137.07,508.00 1137.41,482.61 1137.76,480.80 1138.10,508.00 1138.45,507.10 1138.79,483.16 1139.14,508.00 1139.48,481.99 1139.83,508.00 1140.17,482.61 1140.52,508.00 1140.86,483.46 1141.21,481.56 1141.55,507.08 1141.90,483.08 1142.24,508.00 1142.59,508.00 1142.93,477.76 1143.28,508.00 1143.62,482.91 1143.97,508.00 1144.31,483.31 1144.66,482.03 1145.00,505.15 1145.35,508.00 1145.69,484.46 1146.04,508.00 1146.38,483.54 1146.73,508.00 1147.07,482.39 1147.42,483.04 1147.76,505.55 1148.11,482.65 1148.45,508.00 1148.80,482.89 1149.14,508.00 1149.49,484.72 1149.83,508.00 1150.17,508.00 1150.51,480.77 1150.86,482.11 1151.20,508.00 1151.55,508.00 1151.89,484.60 1152.24,508.00 1152.58,486.61 1152.93,483.28 1153.27,508.00 1153.62,481.31 1153.96,508.00 1154.31,482.50 1154.65,508.00 1155.00,508.00 1155.34,479.81 1155.69,508.00 1156.03,481.45 1156.38,477.39 1156.72,508.00 1157.07,508.00 1157.41,482.01 1157.76,508.00 1158.10,478.82 1158.45,480.47 1158.79,508.00 1159.14,508.00 1159.48,481.18 1159.83,481.92 1160.17,508.00 1160.52,479.61 1160.86,508.00 1161.21,508.00 1161.55,479.80 1161.90,481.78 1162.24,508.00 1162.59,482.54 1162.93,508.00 1163.28,508.00 1163.62,480.12 1163.97,508.00 1164.31,481.26 1164.66,507.75 1165.00,482.31 1165.35,507.67 1165.69,483.35 1166.04,508.00 1166.38,481.31 1166.73,508.00 1167.07,478.86 1167.42,482.66 1167.76,508.00 1168.11,479.97 1168.45,508.00 1168.80,506.53 1169.14,481.29 1169.49,482.24 1169.83,508.00 1170.17,483.48 1170.51,508.00 1170.86,508.00 1171.20,482.17 1171.55,508.00 1171.89,481.42 1172.24,508.00 1172.58,482.70 1172.93,508.00 1173.27,482.31 1173.62,508.00 1173.96,483.49 1174.31,508.00 1174.65,479.86 1175.00,508.00 1175.34,478.25 1175.69,508.00 1176.03,481.19 1176.38,508.00 1176.72,483.13 1177.07,480.84 1177.41,508.00 1177.76,508.00 1178.10,477.78 1178.45,482.74 1178.79,508.00 1179.14,508.00 1179.48,482.07 1179.83,477.50 1180.17,508.00 1180.52,508.00 1180.86,482.01 1181.21,483.36 1181.55,508.00 1181.90,508.00 1182.24,482.15 1182.59,508.00 1182.93,483.18 1183.28,480.96 1183.62,508.00 1183.97,482.47 1184.31,508.00 1184.66,508.00 1185.00,481.47 1185.35,477.03 1185.69,508.00 1186.04,508.00 1186.38,481.59 1186.73,508.00 1187.07,480.82 1187.42,508.00 1187.76,481.70 1188.11,508.00 1188.45,481.64 1188.80,508.00 1189.14,479.81 1189.49,477.85 1189.83,508.00" fill="none" stroke="#3b4f94" stroke-width="0.95" stroke-linejoin="round"/><polyline points="661.50,480.72 666.91,475.65 671.97,471.72 676.71,471.17 681.18,472.27 685.40,475.93 689.40,476.97 693.20,475.67 696.82,476.26 700.28,480.15 703.59,482.81 706.76,486.13 709.80,486.21 712.73,483.60 715.55,489.58 718.27,485.55 720.90,476.90 723.44,476.26 725.90,482.40 728.28,487.75 730.59,481.91 732.83,478.55 735.01,480.94 737.13,480.04 739.19,478.99 741.20,476.37 743.15,476.00 745.06,472.21 746.92,469.68 748.74,475.81 750.51,482.56 752.25,483.70 753.95,482.60 755.61,478.52 757.23,477.72 758.82,480.56 760.38,480.31 761.90,478.45 763.40,478.21 764.87,479.33 766.31,478.80 767.73,485.34 769.11,479.76 770.48,482.87 771.82,486.71 773.13,490.43 774.43,484.11 775.70,483.44 776.95,478.23 778.19,480.98 779.40,483.28 780.59,487.52 781.77,480.91 782.93,474.81 784.07,486.90 785.19,473.43 786.30,475.84 787.39,485.89 788.47,483.29 789.53,485.05 790.57,479.84 791.61,484.36 792.63,486.41 793.63,495.65 794.62,486.37 795.60,479.41 796.57,476.83 797.53,471.22 798.47,490.24 799.40,487.45 800.32,480.16 801.23,488.23 802.13,480.69 803.02,488.51 803.90,496.91 804.77,501.23 805.63,478.97 806.48,479.80 807.32,484.11 808.15,496.08 808.97,484.69 809.79,487.43 810.59,480.92 811.39,486.97 812.17,478.67 812.95,484.90 813.73,497.14 814.49,487.38 815.25,493.34 816.00,481.65 816.75,473.60 817.25,498.65 818.00,479.47 819.00,481.84 819.75,491.14 820.25,487.71 821.00,487.75 821.75,481.60 822.25,475.62 823.00,482.07 823.75,491.16 824.25,488.75 825.00,498.05 825.75,481.54 826.25,487.96 827.00,479.56 827.75,486.18 828.25,483.98 829.00,481.06 829.75,490.29 830.25,481.86 830.75,477.95 831.25,475.60 832.00,478.43 832.75,482.34 833.25,476.25 833.75,480.69 834.25,477.90 835.00,478.78 835.75,480.41 836.25,496.25 836.75,484.94 837.25,491.06 837.75,479.54 838.25,491.14 839.00,480.48 839.75,476.08 840.25,479.10 840.75,481.09 841.25,482.66 841.75,488.27 842.25,476.85 842.75,482.03 843.25,486.05 843.75,493.85 844.25,494.59 844.75,493.36 845.25,479.89 845.75,483.20 846.25,485.31 846.75,482.16 847.25,484.39 847.75,482.38 848.25,488.60 848.75,484.27 849.25,477.55 849.75,480.48 850.25,480.43 850.75,490.65 851.25,490.67 851.75,479.91 852.25,476.68 852.75,485.81 853.25,477.49 853.75,479.14 854.25,492.95 854.75,482.74 855.25,490.97 855.75,493.16 856.25,482.86 856.75,493.07 857.25,483.22 857.75,483.83 858.25,489.95 858.75,473.23 859.25,481.11 859.75,483.94 860.25,487.98 860.75,498.03 861.25,482.90 861.75,480.33 862.25,472.36 862.75,476.17 863.25,485.68 863.75,477.56 864.25,485.63 864.75,488.37 865.25,476.24 865.75,486.83 866.25,484.13 866.75,480.13 867.25,478.34 867.75,492.64 868.25,478.02 868.75,485.56 869.25,482.36 869.75,481.49 870.25,488.37 870.75,489.30 871.25,480.86 871.75,475.82 872.25,482.61 872.75,486.68 873.25,480.89 873.75,487.18 874.25,478.66 874.75,490.78 875.25,473.50 875.75,484.62 876.25,479.92 876.75,482.84 877.25,479.35 877.75,486.71 878.25,474.37 878.75,483.12 879.25,481.83 879.75,483.46 880.25,477.35 880.75,492.17 881.25,476.82 881.75,477.62 882.25,488.03 882.75,472.67 883.25,496.81 883.75,490.82 884.25,476.41 884.75,485.06 885.25,473.91 885.75,486.06 886.25,481.24 886.75,478.59 887.25,491.58 887.75,475.60 888.25,484.08 888.75,490.20 889.25,473.34 889.75,478.70 890.25,487.99 890.75,475.26 891.25,487.99 891.75,475.83 892.25,491.06 892.75,477.54 893.25,478.30 893.75,487.75 894.25,475.32 894.75,486.40 895.25,476.75 895.75,473.64 896.25,483.80 896.75,476.61 897.25,485.19 897.75,484.73 898.25,479.44 898.75,487.13 899.25,478.74 899.75,481.05 900.25,475.06 900.75,471.77 901.25,481.92 901.75,482.00 902.25,478.24 902.75,482.78 903.25,476.29 903.75,486.18 904.25,477.15 904.75,475.76 905.25,482.04 905.75,481.92 906.25,471.86 906.75,476.98 907.25,489.10 907.75,483.67 908.25,476.23 908.75,481.90 909.25,472.44 909.75,479.48 910.25,481.74 910.75,483.09 911.25,472.85 911.75,482.03 912.25,472.92 912.75,473.12 913.25,481.78 913.75,475.26 914.25,481.45 914.75,480.18 915.25,471.39 915.75,468.19 916.25,487.89 916.75,470.14 917.25,480.11 917.75,473.23 918.25,480.20 918.75,471.85 919.25,479.22 919.75,472.74 920.25,477.59 920.75,470.56 921.25,479.79 921.75,479.44 922.25,472.73 922.75,467.81 923.25,472.52 923.75,472.18 924.25,475.42 924.75,465.70 925.25,474.86 925.75,472.99 926.25,470.00 926.75,477.34 927.25,462.93 927.75,465.86 928.25,476.67 928.75,477.55 929.25,468.93 929.75,475.33 930.25,465.83 930.75,466.46 931.25,475.53 931.75,464.91 932.25,475.28 932.75,471.63 933.25,465.42 933.75,474.78 934.25,463.97 934.75,465.05 935.25,472.49 935.75,474.14 936.25,462.04 936.75,460.45 937.25,468.99 937.75,459.50 938.25,466.48 938.75,468.76 939.25,461.74 939.75,470.49 940.25,457.03 940.75,468.44 941.25,457.96 941.75,466.71 942.25,456.07 942.75,464.87 943.25,452.67 943.75,467.22 944.25,454.77 944.75,463.96 945.25,451.70 945.75,462.66 946.25,445.56 946.75,446.92 947.25,462.32 947.75,447.90 948.25,457.91 948.75,453.67 949.25,446.69 949.75,443.87 950.25,453.25 950.75,452.03 951.25,445.92 951.75,452.75 952.25,438.18 952.75,448.66 953.25,435.82 953.75,434.90 954.25,445.52 954.75,441.52 955.25,426.27 955.75,436.72 956.25,421.52 956.75,429.94 957.25,418.54 957.75,433.70 958.25,421.64 958.75,430.13 959.25,413.95 959.75,427.42 960.25,414.74 960.75,428.68 961.25,43.00 961.75,426.96 962.25,412.79 962.75,409.97 963.25,430.27 963.75,429.96 964.25,418.46 964.75,422.92 965.25,434.67 965.75,425.93 966.25,441.81 966.75,426.83 967.25,442.51 967.75,435.87 968.25,444.15 968.75,455.33 969.25,441.66 969.75,446.26 970.25,457.21 970.75,440.03 971.25,460.77 971.75,451.50 972.25,463.13 972.75,454.24 973.25,468.59 973.75,474.90 974.25,457.52 974.75,470.41 975.25,457.43 975.75,473.47 976.25,459.49 976.75,462.16 977.25,475.46 977.75,473.58 978.25,466.15 978.75,464.73 979.25,479.69 979.75,470.40 980.25,479.29 980.75,468.83 981.25,483.77 981.75,469.80 982.25,482.22 982.75,484.59 983.25,476.08 983.75,472.49 984.25,487.49 984.75,483.67 985.25,473.83 985.75,476.31 986.25,487.24 986.75,478.53 987.25,486.90 987.75,483.68 988.25,478.28 988.75,475.13 989.25,490.86 989.75,476.87 990.25,489.28 990.75,491.36 991.25,476.78 991.83,480.75 992.17,493.85 992.24,491.88 992.58,478.97 992.93,490.16 993.27,478.26 993.62,493.83 993.96,479.95 994.31,493.34 994.65,476.09 995.00,491.41 995.34,481.94 995.69,500.61 996.03,475.65 996.38,490.07 996.72,479.77 997.07,491.16 997.41,479.82 997.76,492.50 998.10,484.89 998.45,478.66 998.79,495.47 999.14,495.94 999.48,482.30 999.83,497.25 1000.17,481.82 1000.52,498.65 1000.86,479.02 1001.21,479.83 1001.55,496.23 1001.90,485.95 1002.24,493.11 1002.59,498.28 1002.93,480.96 1003.28,483.37 1003.62,498.95 1003.97,495.80 1004.31,487.39 1004.66,497.67 1005.00,481.55 1005.35,485.34 1005.69,499.11 1006.04,482.32 1006.38,498.82 1006.73,483.39 1007.07,500.23 1007.42,496.86 1007.76,480.17 1008.11,484.83 1008.45,496.56 1008.80,505.75 1009.14,485.34 1009.49,501.54 1009.83,483.86 1010.17,483.53 1010.51,505.48 1010.86,484.42 1011.20,500.45 1011.55,506.26 1011.89,487.47 1012.24,501.38 1012.58,488.02 1012.93,484.96 1013.27,494.61 1013.62,501.80 1013.96,415.00 1014.31,415.00 1014.65,494.62 1015.00,482.57 1015.34,500.13 1015.69,484.69 1016.03,505.80 1016.38,496.70 1016.72,483.16 1017.07,500.62 1017.41,482.47 1017.76,484.38 1018.10,508.00 1018.45,482.61 1018.79,508.00 1019.14,487.53 1019.48,503.79 1019.83,486.01 1020.17,503.97 1020.52,480.28 1020.86,507.88 1021.21,481.04 1021.55,498.42 1021.90,483.98 1022.24,497.62 1022.59,486.66 1022.93,504.03 1023.28,500.77 1023.62,485.77 1023.97,506.21 1024.31,484.67 1024.66,485.52 1025.00,497.75 1025.35,508.00 1025.69,487.42 1026.04,477.49 1026.38,504.56 1026.73,485.86 1027.07,499.42 1027.42,508.00 1027.76,485.26 1028.11,501.04 1028.45,481.91 1028.80,487.88 1029.14,503.60 1029.49,483.95 1029.83,506.03 1030.17,484.57 1030.51,503.40 1030.86,503.58 1031.20,485.43 1031.55,508.00 1031.89,485.14 1032.24,480.12 1032.58,508.00 1032.93,484.79 1033.27,508.00 1033.62,480.81 1033.96,507.97 1034.31,484.77 1034.65,502.19 1035.00,482.82 1035.34,507.78 1035.69,506.08 1036.03,483.92 1036.38,505.52 1036.72,486.29 1037.07,504.00 1037.41,484.36 1037.76,488.31 1038.10,504.05 1038.45,488.25 1038.79,503.18 1039.14,501.18 1039.48,483.94 1039.83,507.80 1040.17,487.69 1040.52,484.82 1040.86,508.00 1041.21,506.69 1041.55,484.92 1041.90,480.59 1042.24,502.74 1042.59,503.76 1042.93,487.66 1043.28,501.68 1043.62,483.86 1043.97,483.47 1044.31,505.98 1044.66,481.72 1045.00,504.46 1045.35,447.82 1045.69,507.71 1046.04,487.40 1046.38,499.05 1046.73,497.84 1047.07,485.38 1047.42,506.19 1047.76,487.68 1048.11,507.92 1048.45,486.56 1048.80,485.72 1049.14,508.00 1049.49,504.36 1049.83,482.22 1050.17,508.00 1050.51,481.73 1050.86,505.16 1051.20,488.74 1051.55,508.00 1051.89,481.51 1052.24,487.02 1052.58,507.09 1052.93,502.92 1053.27,479.91 1053.62,503.80 1053.96,485.64 1054.31,485.95 1054.65,508.00 1055.00,482.91 1055.34,505.91 1055.69,508.00 1056.03,482.39 1056.38,484.06 1056.72,508.00 1057.07,505.62 1057.41,482.60 1057.76,508.00 1058.10,484.03 1058.45,486.35 1058.79,506.41 1059.14,486.71 1059.48,507.39 1059.83,508.00 1060.17,488.61 1060.52,483.93 1060.86,499.09 1061.21,484.14 1061.55,505.57 1061.90,485.50 1062.24,508.00 1062.59,508.00 1062.93,484.24 1063.28,483.14 1063.62,508.00 1063.97,500.83 1064.31,490.35 1064.66,508.00 1065.00,483.16 1065.35,508.00 1065.69,484.68 1066.04,483.55 1066.38,508.00 1066.73,503.11 1067.07,482.90 1067.42,464.24 1067.76,508.00 1068.11,508.00 1068.45,487.90 1068.80,483.81 1069.14,506.14 1069.49,483.36 1069.83,505.42 1070.17,483.70 1070.51,508.00 1070.86,488.32 1071.20,508.00 1071.55,502.37 1071.89,486.20 1072.24,508.00 1072.58,486.78 1072.93,503.91 1073.27,485.55 1073.62,506.05 1073.96,486.51 1074.31,508.00 1074.65,483.34 1075.00,484.34 1075.34,507.01 1075.69,508.00 1076.03,486.87 1076.38,505.94 1076.72,478.31 1077.07,483.82 1077.41,503.43 1077.76,483.97 1078.10,504.03 1078.45,508.00 1078.79,487.26 1079.14,486.92 1079.48,506.32 1079.83,506.56 1080.17,479.38 1080.52,486.36 1080.86,503.99 1081.21,486.69 1081.55,504.30 1081.90,485.56 1082.24,504.03 1082.59,508.00 1082.93,484.34 1083.28,508.00 1083.62,485.37 1083.97,473.81 1084.31,505.52 1084.66,508.00 1085.00,480.82 1085.35,504.29 1085.69,487.46 1086.04,508.00 1086.38,482.62 1086.73,505.61 1087.07,486.63 1087.42,507.46 1087.76,483.60 1088.11,483.31 1088.45,504.14 1088.80,503.51 1089.14,480.52 1089.49,481.47 1089.83,508.00 1090.17,504.13 1090.51,484.63 1090.86,508.00 1091.20,484.84 1091.55,484.92 1091.89,508.00 1092.24,508.00 1092.58,479.19 1092.93,483.76 1093.27,502.44 1093.62,508.00 1093.96,482.90 1094.31,507.51 1094.65,480.22 1095.00,482.40 1095.34,507.32 1095.69,508.00 1096.03,482.83 1096.38,506.00 1096.72,482.41 1097.07,508.00 1097.41,483.22 1097.76,508.00 1098.10,483.49 1098.45,476.54 1098.79,508.00 1099.14,506.48 1099.48,484.07 1099.83,482.98 1100.17,508.00 1100.52,505.53 1100.86,481.75 1101.21,507.80 1101.55,482.09 1101.90,508.00 1102.24,482.17 1102.59,508.00 1102.93,481.77 1103.28,506.43 1103.62,482.25 1103.97,508.00 1104.31,486.33 1104.66,508.00 1105.00,484.73 1105.35,508.00 1105.69,483.59 1106.04,508.00 1106.38,486.56 1106.73,483.26 1107.07,508.00 1107.42,483.81 1107.76,507.77 1108.11,481.94 1108.45,503.26 1108.80,508.00 1109.14,482.80 1109.49,508.00 1109.83,486.72 1110.17,483.12 1110.51,506.04 1110.86,508.00 1111.20,483.31 1111.55,508.00 1111.89,484.00 1112.24,484.31 1112.58,508.00 1112.93,482.09 1113.27,508.00 1113.62,483.29 1113.96,508.00 1114.31,508.00 1114.65,478.03 1115.00,482.19 1115.34,507.33 1115.69,508.00 1116.03,479.73 1116.38,484.37 1116.72,505.26 1117.07,504.99 1117.41,482.88 1117.76,482.56 1118.10,505.01 1118.45,481.95 1118.79,506.96 1119.14,508.00 1119.48,484.25 1119.83,508.00 1120.17,481.50 1120.52,508.00 1120.86,485.03 1121.21,481.92 1121.55,508.00 1121.90,507.24 1122.24,483.59 1122.59,482.17 1122.93,508.00 1123.28,484.29 1123.62,508.00 1123.97,482.04 1124.31,508.00 1124.66,508.00 1125.00,483.94 1125.35,508.00 1125.69,481.36 1126.04,484.70 1126.38,508.00 1126.73,508.00 1127.07,482.39 1127.42,507.99 1127.76,479.22 1128.11,503.62 1128.45,482.45 1128.80,486.42 1129.14,508.00 1129.49,507.75 1129.83,483.69 1130.17,505.76 1130.51,476.74 1130.86,482.19 1131.20,508.00 1131.55,507.33 1131.89,480.91 1132.24,508.00 1132.58,483.77 1132.93,483.57 1133.27,508.00 1133.62,477.03 1133.96,508.00 1134.31,508.00 1134.65,484.34 1135.00,508.00 1135.34,482.33 1135.69,506.40 1136.03,485.76 1136.38,481.54 1136.72,507.60 1137.07,482.60 1137.41,508.00 1137.76,481.29 1138.10,508.00 1138.45,508.00 1138.79,483.81 1139.14,482.40 1139.48,508.00 1139.83,508.00 1140.17,479.95 1140.52,508.00 1140.86,482.17 1141.21,482.46 1141.55,506.88 1141.90,508.00 1142.24,480.57 1142.59,481.87 1142.93,508.00 1143.28,508.00 1143.62,482.26 1143.97,508.00 1144.31,480.91 1144.66,485.69 1145.00,507.77 1145.35,508.00 1145.69,486.52 1146.04,484.83 1146.38,508.00 1146.73,508.00 1147.07,481.96 1147.42,508.00 1147.76,483.45 1148.11,508.00 1148.45,485.54 1148.80,481.91 1149.14,508.00 1149.49,508.00 1149.83,483.14 1150.17,482.76 1150.51,508.00 1150.86,508.00 1151.20,484.21 1151.55,508.00 1151.89,482.45 1152.24,508.00 1152.58,483.43 1152.93,508.00 1153.27,476.15 1153.62,508.00 1153.96,481.77 1154.31,508.00 1154.65,481.41 1155.00,484.46 1155.34,508.00 1155.69,508.00 1156.03,480.41 1156.38,508.00 1156.72,482.56 1157.07,508.00 1157.41,483.20 1157.76,508.00 1158.10,482.63 1158.45,483.30 1158.79,508.00 1159.14,482.27 1159.48,508.00 1159.83,482.27 1160.17,507.87 1160.52,508.00 1160.86,480.67 1161.21,508.00 1161.55,482.29 1161.90,508.00 1162.24,481.57 1162.59,508.00 1162.93,481.91 1163.28,508.00 1163.62,480.81 1163.97,484.63 1164.31,508.00 1164.66,480.11 1165.00,508.00 1165.35,508.00 1165.69,477.46 1166.04,482.26 1166.38,506.52 1166.73,508.00 1167.07,484.74 1167.42,508.00 1167.76,482.85 1168.11,482.39 1168.45,508.00 1168.80,483.59 1169.14,508.00 1169.49,483.70 1169.83,508.00 1170.17,508.00 1170.51,482.90 1170.86,508.00 1171.20,480.14 1171.55,508.00 1171.89,482.61 1172.24,508.00 1172.58,483.07 1172.93,508.00 1173.27,481.40 1173.62,508.00 1173.96,481.81 1174.31,478.48 1174.65,508.00 1175.00,508.00 1175.34,484.86 1175.69,508.00 1176.03,480.54 1176.38,508.00 1176.72,482.12 1177.07,508.00 1177.41,481.52 1177.76,508.00 1178.10,484.36 1178.45,508.00 1178.79,483.41 1179.14,508.00 1179.48,477.93 1179.83,508.00 1180.17,483.52 1180.52,508.00 1180.86,478.69 1181.21,507.87 1181.55,478.88 1181.90,508.00 1182.24,482.11 1182.59,508.00 1182.93,482.02 1183.28,508.00 1183.62,479.27 1183.97,508.00 1184.31,482.98 1184.66,482.01 1185.00,507.76 1185.35,481.11 1185.69,508.00 1186.04,508.00 1186.38,481.69 1186.73,482.82 1187.07,508.00 1187.42,508.00 1187.76,481.80 1188.11,508.00 1188.45,480.63 1188.80,508.00 1189.14,482.56 1189.49,508.00 1189.83,478.80" fill="none" stroke="#b52d3c" stroke-width="0.95" stroke-linejoin="round"/><rect x="661.5" y="41.5" width="529.0" height="466.5" fill="none" stroke="#5a5a5a" stroke-width="1"/></svg>
<span class="tk r" style="left:613px;width:44.5px;top:37.0px">0</span>
<span class="tk r" style="left:613px;width:44.5px;top:64.4px">-10</span>
<span class="tk r" style="left:613px;width:44.5px;top:91.7px">-20</span>
<span class="tk r" style="left:613px;width:44.5px;top:119.1px">-30</span>
<span class="tk r" style="left:613px;width:44.5px;top:146.4px">-40</span>
<span class="tk r" style="left:613px;width:44.5px;top:173.8px">-50</span>
<span class="tk r" style="left:613px;width:44.5px;top:201.1px">-60</span>
<span class="tk r" style="left:613px;width:44.5px;top:228.5px">-70</span>
<span class="tk r" style="left:613px;width:44.5px;top:255.8px">-80</span>
<span class="tk r" style="left:613px;width:44.5px;top:283.2px">-90</span>
<span class="tk r" style="left:613px;width:44.5px;top:310.5px">-100</span>
<span class="tk r" style="left:613px;width:44.5px;top:337.9px">-110</span>
<span class="tk r" style="left:613px;width:44.5px;top:365.2px">-120</span>
<span class="tk r" style="left:613px;width:44.5px;top:392.6px">-130</span>
<span class="tk r" style="left:613px;width:44.5px;top:419.9px">-140</span>
<span class="tk r" style="left:613px;width:44.5px;top:447.3px">-150</span>
<span class="tk r" style="left:613px;width:44.5px;top:474.6px">-160</span>
<span class="tk r" style="left:613px;width:44.5px;top:502.0px">-170</span>
<span class="tk c" style="left:631.5px;width:60px;top:512.5px">20</span>
<span class="tk c" style="left:662.6px;width:60px;top:512.5px">30</span>
<span class="tk c" style="left:701.7px;width:60px;top:512.5px">50</span>
<span class="tk c" style="left:754.8px;width:60px;top:512.5px">100</span>
<span class="tk c" style="left:807.8px;width:60px;top:512.5px">200</span>
<span class="tk c" style="left:838.9px;width:60px;top:512.5px">300</span>
<span class="tk c" style="left:878.0px;width:60px;top:512.5px">500</span>
<span class="tk c" style="left:931.1px;width:60px;top:512.5px">1k</span>
<span class="tk c" style="left:984.2px;width:60px;top:512.5px">2k</span>
<span class="tk c" style="left:1015.2px;width:60px;top:512.5px">3k</span>
<span class="tk c" style="left:1054.3px;width:60px;top:512.5px">5k</span>
<span class="tk c" style="left:1107.4px;width:60px;top:512.5px">10k</span>
<span class="tk c" style="left:1160.5px;width:60px;top:512.5px">20k</span>
<span class="tk c" style="left:867px;width:120px;top:524.5px">Frequency (Hz)</span>
<span class="tk" style="left:625px;top:274px;transform:translate(-50%,-50%) rotate(-90deg);font-size:11.5px">Level (dBrA)</span>
<span style="left:916px;top:27px;font-family:'Liberation Serif',serif;font-size:12px;font-weight:bold;color:#111;transform-origin:0 50%;transform:scaleX(0.78)">FFT</span>
<div style="left:0px;top:541px;width:1200px;height:1px;background:#b4b4b4;"></div>
<div style="left:0px;top:542px;width:1200px;height:2px;background:#c8caca;"></div>
<div style="left:0px;top:544px;width:1200px;height:7px;background:#43737f;"></div>
<div style="left:604px;top:546px;width:2.4px;height:2.4px;background:#c2d6de;"></div>
<div style="left:610px;top:546px;width:2.4px;height:2.4px;background:#c2d6de;"></div>
<div style="left:616px;top:546px;width:2.4px;height:2.4px;background:#c2d6de;"></div>
<div style="left:0px;top:551px;width:1200px;height:25px;background:linear-gradient(#d2d2d2,#d6d6d6 60%,#dedede);"></div>
<div style="left:0px;top:576px;width:1200px;height:2px;background:#a9a9a9;"></div>
<svg style="left:3px;top:555px" width="16" height="16" viewBox="0 0 16 16"><rect width="16" height="16" fill="#25445a"/><path d="M8 2V14M2 8H14" stroke="#fff" stroke-width="2"/></svg>
<span class="" style="left:22px;top:556px;font-size:13.5px;color:#1a1a1a;letter-spacing:0.2px">Add Meter</span>
<svg style="left:92px;top:562px" width="5" height="3" viewBox="0 0 5 3"><path d="M0 0H5L2.5 3Z" fill="#111"/></svg>
<div style="left:105.7px;top:554.5px;width:1.3px;height:17px;background:#ececec;"></div>
<svg style="left:110px;top:555px" width="16" height="15.5" viewBox="0 0 16 15.5"><rect width="16" height="15.5" fill="#25445a"/><rect x="1.3" y="2.2" width="7.6" height="3" rx="1.4" fill="#fff"/><rect x="1.3" y="6.2" width="6.2" height="3" rx="1.4" fill="#fff"/><rect x="1.3" y="10.2" width="7.6" height="3" rx="1.4" fill="#fff"/><path d="M7.4 6.1H11V3.4L15.5 7.8L11 12.2V9.5H7.4Z" fill="#fff" stroke="#25445a" stroke-width="0.7"/></svg>
<span class="" style="left:129px;top:556px;font-size:13px;color:#1a1a1a;">Save Meter Data</span>
<div style="left:237.5px;top:554.5px;width:1.3px;height:17px;background:#ececec;"></div>
<svg style="left:242px;top:555px" width="16" height="16" viewBox="0 0 16 16"><rect width="16" height="16" fill="#25445a"/><path d="M4.6 2.6L12.3 8L4.6 13.4Z" fill="#fff"/></svg>
<span class="" style="left:262px;top:556px;font-size:13px;color:#1a1a1a;">Regulate</span>
<div style="left:0px;top:578px;width:1200px;height:322px;background:#aaaaaa;"></div>
<div style="left:2.5px;top:578px;width:592.5px;height:159px;background:#dce5e8;"></div>
<div style="left:2.5px;top:578px;width:592.5px;height:25.6px;background:#dde6e9;"></div>
<div style="left:2.5px;top:603.6px;width:592.5px;height:1.5px;background:#a6aaac;"></div>
<span class="hb" style="left:7.8px;top:584.2px;transform:scaleX(1.037)">RMS Level</span>
<div style="left:94.0px;top:578px;width:76px;height:25.6px;background:#fff;"></div>
<div style="left:164.0px;top:578px;width:6px;height:25.6px;background:#f3f4f5;"></div>
<span class="hs" style="left:99.0px;top:585px;">Vrms</span>
<svg style="left:161.0px;top:590px" width="5" height="3" viewBox="0 0 5 3"><path d="M0 0H5L2.5 3Z" fill="#111"/></svg>
<svg style="left:172.6px;top:582.8px" width="16.3" height="16" viewBox="0 0 16.3 16"><rect width="16.3" height="16" fill="#25445a"/><rect x="1.6" y="4" width="13" height="8" fill="#4f6f84"/><path d="M1.6 3.9H14.7M1.6 12.2H14.7" stroke="#f4f7f8" stroke-width="1.5" fill="none"/><path d="M1.8 11L6.2 7.2L9.2 9.6L14.5 5" stroke="#e9eff2" stroke-width="1.1" fill="none"/></svg>
<svg style="left:191.0px;top:590px" width="5" height="3" viewBox="0 0 5 3"><path d="M0 0H5L2.5 3Z" fill="#111"/></svg>
<svg style="left:203.5px;top:582.8px" width="16" height="16" viewBox="0 0 16 16"><rect width="16" height="16" fill="#25445a"/><polygon points="6.39,3.71 7.05,1.78 9.05,1.78 9.71,3.71 9.91,3.79 11.74,2.89 13.16,4.31 12.26,6.14 12.34,6.34 14.27,7.00 14.27,9.00 12.34,9.66 12.26,9.86 13.16,11.69 11.74,13.11 9.91,12.21 9.71,12.29 9.05,14.22 7.05,14.22 6.39,12.29 6.19,12.21 4.36,13.11 2.94,11.69 3.84,9.86 3.76,9.66 1.83,9.00 1.83,7.00 3.76,6.34 3.84,6.14 2.94,4.31 4.36,2.89 6.19,3.79" fill="#fff"/><circle cx="8.05" cy="8.0" r="2.15" fill="#25445a"/></svg>
<div style="left:544.5px;top:582px;width:1.3px;height:19px;background:#eef3f5;"></div>
<svg style="left:552.0px;top:584.5px" width="12" height="12" viewBox="0 0 12 12"><path d="M4.2 1H1V11H11V7.8" fill="none" stroke="#1c3a7e" stroke-width="2"/><path d="M5.4 6.6L9.8 2.2" fill="none" stroke="#1c3a7e" stroke-width="1.9"/><path d="M6.2 0H12V5.8Z" fill="#1c3a7e"/></svg>
<svg style="left:575.5px;top:584.3px" width="12" height="12" viewBox="0 0 12 12"><path d="M1.2 1.2L10.8 10.8M10.8 1.2L1.2 10.8" stroke="#1c3550" stroke-width="2" fill="none"/></svg>
<span class="ch" style="left:9.8px;top:623px;">Ch1</span>
<span class="ch" style="left:9.8px;top:686px;">Ch2</span>
<div style="left:5.5px;top:668.4px;width:149.5px;height:1.3px;background:#a4a8aa;"></div>
<svg style="left:141.5px;top:633px" width="11" height="10" viewBox="0 0 11 10"><path d="M0 0H11L5.5 10Z" fill="#0a0a0a"/></svg>
<svg style="left:141.5px;top:696px" width="11" height="10" viewBox="0 0 11 10"><path d="M0 0H11L5.5 10Z" fill="#0a0a0a"/></svg>
<div style="left:155.0px;top:608.3px;width:431px;height:123.5px;background:#000;"></div>
<div style="left:155.0px;top:667px;width:431px;height:5px;background:#d9dcde;"></div>
<div style="left:155.0px;top:668.4px;width:431px;height:1.3px;background:#a4a8aa;"></div>
<div style="left:155.0px;top:649.5px;width:431px;height:18.5px;background:#c4c4c4;"></div>
<div style="left:156.5px;top:651px;width:428.5px;height:16px;background:#808080;"></div>
<div style="left:156.5px;top:651px;width:347.08500000000004px;height:16px;background:#14f014;"></div>
<div style="left:156.5px;top:656.5px;width:362.0825px;height:3px;background:#000;"></div>
<div style="left:155.0px;top:670.7px;width:431px;height:18.5px;background:#c4c4c4;"></div>
<div style="left:156.5px;top:672.2px;width:428.5px;height:16px;background:#808080;"></div>
<div style="left:156.5px;top:672.2px;width:347.08500000000004px;height:16px;background:#14f014;"></div>
<div style="left:156.5px;top:677.7px;width:362.0825px;height:3px;background:#000;"></div>
<span class="big r" style="left:168.0px;width:300px;top:615.2px;transform:scaleX(0.97)">10.46</span>
<span class="big r" style="left:380.0px;width:200px;top:615.2px;transform:scaleX(1.03)">Vrms</span>
<span class="big r" style="left:168.0px;width:300px;top:695.2px;transform:scaleX(0.97)">10.46</span>
<span class="big r" style="left:380.0px;width:200px;top:695.2px;transform:scaleX(1.03)">Vrms</span>
<div style="left:601px;top:578px;width:591px;height:159px;background:#dce5e8;"></div>
<div style="left:601px;top:578px;width:591px;height:25.6px;background:#dde6e9;"></div>
<div style="left:601px;top:603.6px;width:591px;height:1.5px;background:#a6aaac;"></div>
<span class="hb" style="left:606.3px;top:584.2px;transform:scaleX(1.108)">THD+N Ratio</span>
<div style="left:714px;top:578px;width:76px;height:25.6px;background:#fff;"></div>
<div style="left:784px;top:578px;width:6px;height:25.6px;background:#f3f4f5;"></div>
<span class="hs" style="left:719px;top:585px;">%</span>
<svg style="left:781px;top:590px" width="5" height="3" viewBox="0 0 5 3"><path d="M0 0H5L2.5 3Z" fill="#111"/></svg>
<svg style="left:792.6px;top:582.8px" width="16.3" height="16" viewBox="0 0 16.3 16"><rect width="16.3" height="16" fill="#25445a"/><rect x="1.6" y="4" width="13" height="8" fill="#4f6f84"/><path d="M1.6 3.9H14.7M1.6 12.2H14.7" stroke="#f4f7f8" stroke-width="1.5" fill="none"/><path d="M1.8 11L6.2 7.2L9.2 9.6L14.5 5" stroke="#e9eff2" stroke-width="1.1" fill="none"/></svg>
<svg style="left:811px;top:590px" width="5" height="3" viewBox="0 0 5 3"><path d="M0 0H5L2.5 3Z" fill="#111"/></svg>
<svg style="left:823.5px;top:582.8px" width="16" height="16" viewBox="0 0 16 16"><rect width="16" height="16" fill="#25445a"/><polygon points="6.39,3.71 7.05,1.78 9.05,1.78 9.71,3.71 9.91,3.79 11.74,2.89 13.16,4.31 12.26,6.14 12.34,6.34 14.27,7.00 14.27,9.00 12.34,9.66 12.26,9.86 13.16,11.69 11.74,13.11 9.91,12.21 9.71,12.29 9.05,14.22 7.05,14.22 6.39,12.29 6.19,12.21 4.36,13.11 2.94,11.69 3.84,9.86 3.76,9.66 1.83,9.00 1.83,7.00 3.76,6.34 3.84,6.14 2.94,4.31 4.36,2.89 6.19,3.79" fill="#fff"/><circle cx="8.05" cy="8.0" r="2.15" fill="#25445a"/></svg>
<div style="left:1143px;top:582px;width:1.3px;height:19px;background:#eef3f5;"></div>
<svg style="left:1150.5px;top:584.5px" width="12" height="12" viewBox="0 0 12 12"><path d="M4.2 1H1V11H11V7.8" fill="none" stroke="#1c3a7e" stroke-width="2"/><path d="M5.4 6.6L9.8 2.2" fill="none" stroke="#1c3a7e" stroke-width="1.9"/><path d="M6.2 0H12V5.8Z" fill="#1c3a7e"/></svg>
<svg style="left:1174px;top:584.3px" width="12" height="12" viewBox="0 0 12 12"><path d="M1.2 1.2L10.8 10.8M10.8 1.2L1.2 10.8" stroke="#1c3550" stroke-width="2" fill="none"/></svg>
<span class="ch" style="left:608.3px;top:623px;">Ch1</span>
<span class="ch" style="left:608.3px;top:686px;">Ch2</span>
<div style="left:604px;top:668.4px;width:148.3px;height:1.3px;background:#a4a8aa;"></div>
<svg style="left:740px;top:633px" width="11" height="10" viewBox="0 0 11 10"><path d="M0 0H11L5.5 10Z" fill="#0a0a0a"/></svg>
<svg style="left:740px;top:696px" width="11" height="10" viewBox="0 0 11 10"><path d="M0 0H11L5.5 10Z" fill="#0a0a0a"/></svg>
<div style="left:752.3px;top:608.3px;width:431px;height:123.5px;background:#000;"></div>
<div style="left:752.3px;top:667px;width:431px;height:5px;background:#d9dcde;"></div>
<div style="left:752.3px;top:668.4px;width:431px;height:1.3px;background:#a4a8aa;"></div>
<div style="left:752.3px;top:649.5px;width:431px;height:18.5px;background:#c4c4c4;"></div>
<div style="left:753.8px;top:651px;width:428.5px;height:16px;background:#808080;"></div>
<div style="left:753.8px;top:656.5px;width:428.5px;height:3px;background:#000;"></div>
<div style="left:752.3px;top:670.7px;width:431px;height:18.5px;background:#c4c4c4;"></div>
<div style="left:753.8px;top:672.2px;width:428.5px;height:16px;background:#808080;"></div>
<div style="left:753.8px;top:677.7px;width:428.5px;height:3px;background:#000;"></div>
<span class="big r" style="left:828.8px;width:300px;top:615.2px;transform:scaleX(0.97)">0.000049</span>
<span class="big r" style="left:978.8px;width:200px;top:615.2px;transform:scaleX(0.97)">%</span>
<span class="big r" style="left:828.8px;width:300px;top:695.2px;transform:scaleX(0.97)">0.000051</span>
<span class="big r" style="left:978.8px;width:200px;top:695.2px;transform:scaleX(0.97)">%</span>
<div style="left:2.5px;top:742px;width:592.5px;height:158px;background:#dce5e8;"></div>
<div style="left:2.5px;top:742px;width:592.5px;height:25.3px;background:#dde6e9;"></div>
<div style="left:2.5px;top:767.3px;width:592.5px;height:1.5px;background:#a6aaac;"></div>
<span class="hb" style="left:7.8px;top:748.2px;transform:scaleX(1.053)">Frequency</span>
<div style="left:94.0px;top:742px;width:76px;height:25.3px;background:#fff;"></div>
<div style="left:164.0px;top:742px;width:6px;height:25.3px;background:#f3f4f5;"></div>
<span class="hs" style="left:99.0px;top:749px;">Hz</span>
<svg style="left:161.0px;top:754px" width="5" height="3" viewBox="0 0 5 3"><path d="M0 0H5L2.5 3Z" fill="#111"/></svg>
<svg style="left:172.6px;top:746.8px" width="16.3" height="16" viewBox="0 0 16.3 16"><rect width="16.3" height="16" fill="#25445a"/><rect x="1.6" y="4" width="13" height="8" fill="#4f6f84"/><path d="M1.6 3.9H14.7M1.6 12.2H14.7" stroke="#f4f7f8" stroke-width="1.5" fill="none"/><path d="M1.8 11L6.2 7.2L9.2 9.6L14.5 5" stroke="#e9eff2" stroke-width="1.1" fill="none"/></svg>
<svg style="left:191.0px;top:754px" width="5" height="3" viewBox="0 0 5 3"><path d="M0 0H5L2.5 3Z" fill="#111"/></svg>
<svg style="left:203.5px;top:746.8px" width="16" height="16" viewBox="0 0 16 16"><rect width="16" height="16" fill="#25445a"/><polygon points="6.39,3.71 7.05,1.78 9.05,1.78 9.71,3.71 9.91,3.79 11.74,2.89 13.16,4.31 12.26,6.14 12.34,6.34 14.27,7.00 14.27,9.00 12.34,9.66 12.26,9.86 13.16,11.69 11.74,13.11 9.91,12.21 9.71,12.29 9.05,14.22 7.05,14.22 6.39,12.29 6.19,12.21 4.36,13.11 2.94,11.69 3.84,9.86 3.76,9.66 1.83,9.00 1.83,7.00 3.76,6.34 3.84,6.14 2.94,4.31 4.36,2.89 6.19,3.79" fill="#fff"/><circle cx="8.05" cy="8.0" r="2.15" fill="#25445a"/></svg>
<div style="left:544.5px;top:746px;width:1.3px;height:19px;background:#eef3f5;"></div>
<svg style="left:552.0px;top:748.5px" width="12" height="12" viewBox="0 0 12 12"><path d="M4.2 1H1V11H11V7.8" fill="none" stroke="#1c3a7e" stroke-width="2"/><path d="M5.4 6.6L9.8 2.2" fill="none" stroke="#1c3a7e" stroke-width="1.9"/><path d="M6.2 0H12V5.8Z" fill="#1c3a7e"/></svg>
<svg style="left:575.5px;top:748.3px" width="12" height="12" viewBox="0 0 12 12"><path d="M1.2 1.2L10.8 10.8M10.8 1.2L1.2 10.8" stroke="#1c3550" stroke-width="2" fill="none"/></svg>
<span class="ch" style="left:9.8px;top:787px;">Ch1</span>
<span class="ch" style="left:9.8px;top:850px;">Ch2</span>
<div style="left:5.5px;top:832.4px;width:149.5px;height:1.3px;background:#a4a8aa;"></div>
<svg style="left:141.5px;top:797px" width="11" height="10" viewBox="0 0 11 10"><path d="M0 0H11L5.5 10Z" fill="#0a0a0a"/></svg>
<svg style="left:141.5px;top:860px" width="11" height="10" viewBox="0 0 11 10"><path d="M0 0H11L5.5 10Z" fill="#0a0a0a"/></svg>
<div style="left:155.0px;top:772.3px;width:431px;height:122.6px;background:#000;"></div>
<div style="left:155.0px;top:831px;width:431px;height:5px;background:#d9dcde;"></div>
<div style="left:155.0px;top:832.4px;width:431px;height:1.3px;background:#a4a8aa;"></div>
<div style="left:155.0px;top:813.0px;width:431px;height:18.5px;background:#c4c4c4;"></div>
<div style="left:156.5px;top:814.5px;width:428.5px;height:16px;background:#808080;"></div>
<div style="left:156.5px;top:814.5px;width:243.8165px;height:16px;background:#14f014;"></div>
<div style="left:156.5px;top:820.0px;width:428.5px;height:3px;background:#000;"></div>
<div style="left:155.0px;top:834.7px;width:431px;height:18.5px;background:#c4c4c4;"></div>
<div style="left:156.5px;top:836.2px;width:428.5px;height:16px;background:#808080;"></div>
<div style="left:156.5px;top:836.2px;width:243.8165px;height:16px;background:#14f014;"></div>
<div style="left:156.5px;top:841.7px;width:428.5px;height:3px;background:#000;"></div>
<span class="big r" style="left:193.5px;width:300px;top:778.9px;transform:scaleX(0.97)">1.00009</span>
<span class="big r" style="left:381.5px;width:200px;top:778.9px;transform:scaleX(1.0)">kHz</span>
<span class="big r" style="left:193.5px;width:300px;top:860px;transform:scaleX(0.97)">1.00009</span>
<span class="big r" style="left:381.5px;width:200px;top:860px;transform:scaleX(1.0)">kHz</span>
<div style="left:601px;top:742px;width:591px;height:158px;background:#dce5e8;"></div>
<div style="left:601px;top:742px;width:591px;height:25.3px;background:#dde6e9;"></div>
<div style="left:601px;top:767.3px;width:591px;height:1.5px;background:#a6aaac;"></div>
<span class="hb" style="left:606.3px;top:748.2px;transform:scaleX(1.074)">SINAD</span>
<div style="left:663px;top:742px;width:76px;height:25.3px;background:#fff;"></div>
<div style="left:733px;top:742px;width:6px;height:25.3px;background:#f3f4f5;"></div>
<span class="hs" style="left:668px;top:749px;">dB</span>
<svg style="left:730px;top:754px" width="5" height="3" viewBox="0 0 5 3"><path d="M0 0H5L2.5 3Z" fill="#111"/></svg>
<svg style="left:741.6px;top:746.8px" width="16.3" height="16" viewBox="0 0 16.3 16"><rect width="16.3" height="16" fill="#25445a"/><rect x="1.6" y="4" width="13" height="8" fill="#4f6f84"/><path d="M1.6 3.9H14.7M1.6 12.2H14.7" stroke="#f4f7f8" stroke-width="1.5" fill="none"/><path d="M1.8 11L6.2 7.2L9.2 9.6L14.5 5" stroke="#e9eff2" stroke-width="1.1" fill="none"/></svg>
<svg style="left:760px;top:754px" width="5" height="3" viewBox="0 0 5 3"><path d="M0 0H5L2.5 3Z" fill="#111"/></svg>
<svg style="left:772.5px;top:746.8px" width="16" height="16" viewBox="0 0 16 16"><rect width="16" height="16" fill="#25445a"/><polygon points="6.39,3.71 7.05,1.78 9.05,1.78 9.71,3.71 9.91,3.79 11.74,2.89 13.16,4.31 12.26,6.14 12.34,6.34 14.27,7.00 14.27,9.00 12.34,9.66 12.26,9.86 13.16,11.69 11.74,13.11 9.91,12.21 9.71,12.29 9.05,14.22 7.05,14.22 6.39,12.29 6.19,12.21 4.36,13.11 2.94,11.69 3.84,9.86 3.76,9.66 1.83,9.00 1.83,7.00 3.76,6.34 3.84,6.14 2.94,4.31 4.36,2.89 6.19,3.79" fill="#fff"/><circle cx="8.05" cy="8.0" r="2.15" fill="#25445a"/></svg>
<div style="left:1143px;top:746px;width:1.3px;height:19px;background:#eef3f5;"></div>
<svg style="left:1150.5px;top:748.5px" width="12" height="12" viewBox="0 0 12 12"><path d="M4.2 1H1V11H11V7.8" fill="none" stroke="#1c3a7e" stroke-width="2"/><path d="M5.4 6.6L9.8 2.2" fill="none" stroke="#1c3a7e" stroke-width="1.9"/><path d="M6.2 0H12V5.8Z" fill="#1c3a7e"/></svg>
<svg style="left:1174px;top:748.3px" width="12" height="12" viewBox="0 0 12 12"><path d="M1.2 1.2L10.8 10.8M10.8 1.2L1.2 10.8" stroke="#1c3550" stroke-width="2" fill="none"/></svg>
<span class="ch" style="left:608.3px;top:787px;">Ch1</span>
<span class="ch" style="left:608.3px;top:850px;">Ch2</span>
<div style="left:604px;top:832.4px;width:148.3px;height:1.3px;background:#a4a8aa;"></div>
<svg style="left:740px;top:797px" width="11" height="10" viewBox="0 0 11 10"><path d="M0 0H11L5.5 10Z" fill="#0a0a0a"/></svg>
<svg style="left:740px;top:860px" width="11" height="10" viewBox="0 0 11 10"><path d="M0 0H11L5.5 10Z" fill="#0a0a0a"/></svg>
<div style="left:752.3px;top:772.3px;width:431px;height:122.6px;background:#000;"></div>
<div style="left:752.3px;top:831px;width:431px;height:5px;background:#d9dcde;"></div>
<div style="left:752.3px;top:832.4px;width:431px;height:1.3px;background:#a4a8aa;"></div>
<div style="left:752.3px;top:813.0px;width:431px;height:18.5px;background:#c4c4c4;"></div>
<div style="left:753.8px;top:814.5px;width:428.5px;height:16px;background:#808080;"></div>
<div style="left:753.8px;top:814.5px;width:428.5px;height:16px;background:#14f014;"></div>
<div style="left:753.8px;top:820.0px;width:428.5px;height:3px;background:#000;"></div>
<div style="left:752.3px;top:834.7px;width:431px;height:18.5px;background:#c4c4c4;"></div>
<div style="left:753.8px;top:836.2px;width:428.5px;height:16px;background:#808080;"></div>
<div style="left:753.8px;top:836.2px;width:428.5px;height:16px;background:#14f014;"></div>
<div style="left:753.8px;top:841.7px;width:428.5px;height:3px;background:#000;"></div>
<span class="big r" style="left:812.8px;width:300px;top:778.9px;transform:scaleX(0.97)">126.165</span>
<span class="big r" style="left:978.0px;width:200px;top:778.9px;transform:scaleX(1.0)">dB</span>
<span class="big r" style="left:812.8px;width:300px;top:860px;transform:scaleX(0.97)">125.791</span>
<span class="big r" style="left:978.0px;width:200px;top:860px;transform:scaleX(1.0)">dB</span>
</body></html>
